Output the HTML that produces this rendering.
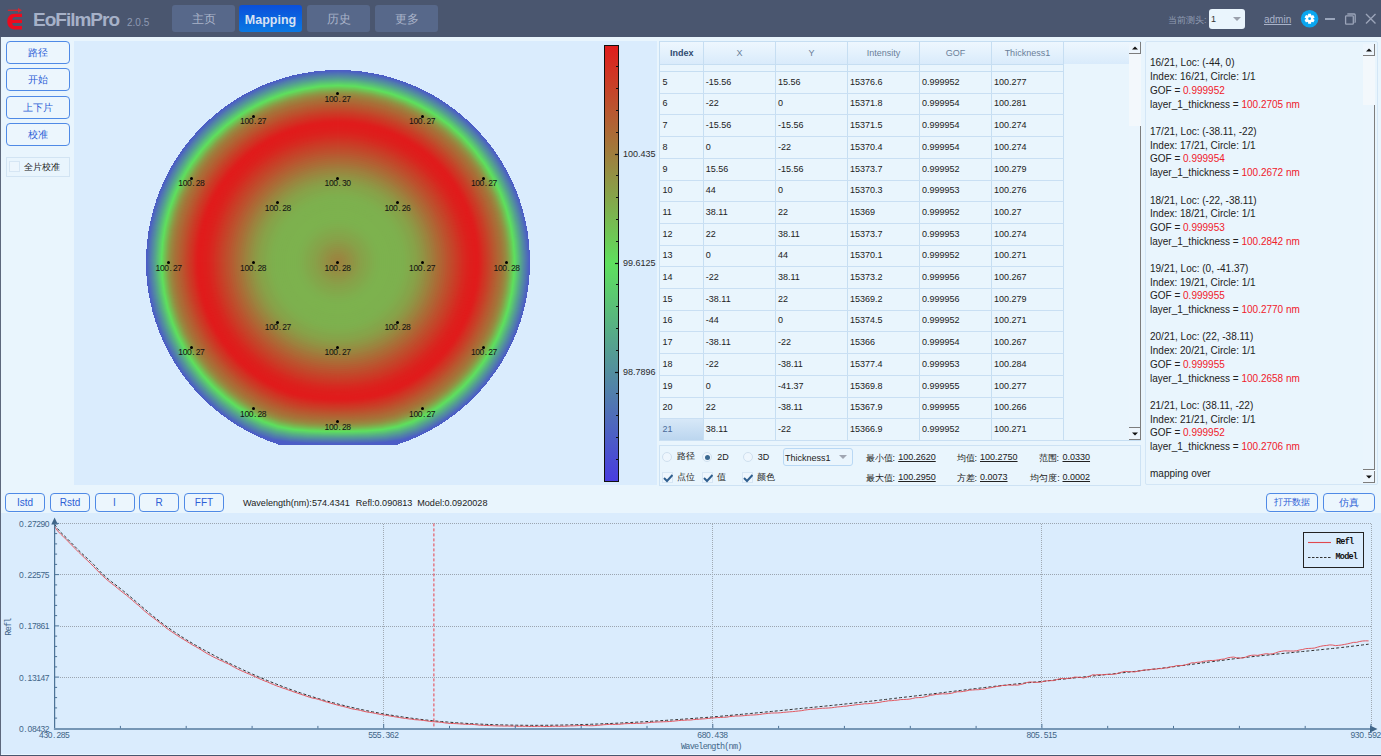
<!DOCTYPE html><html><head><meta charset="utf-8"><style>

*{margin:0;padding:0;box-sizing:border-box}
html,body{width:1381px;height:756px;overflow:hidden}
body{position:relative;background:#e9f5fd;font-family:"Liberation Sans",sans-serif;color:#222}
.abs{position:absolute;white-space:nowrap}
.tb{position:absolute;left:0;top:0;width:1381px;height:37px;background:#4a566f}
.nav{position:absolute;top:5px;height:27px;width:63px;border-radius:3px;background:#57688a;color:#a9b3c9;font-size:12px;text-align:center;line-height:29px}
.nav.act{background:linear-gradient(#0a4fdb,#0a79e3);color:#d6e2f3;font-weight:bold;font-size:12.5px;line-height:30px}
.btn{position:absolute;border:1.5px solid #4f8ae6;border-radius:4px;background:#ecf6fd;color:#2d5fd6;font-size:10px;text-align:center}
.cell{position:absolute;font-size:9px;color:#222;white-space:nowrap}
.lbl{position:absolute;font-size:8.5px;color:#111;white-space:nowrap;transform:translateX(-50%)}
.dot{position:absolute;width:3px;height:3px;border-radius:50%;background:#000}
.log{position:absolute;left:1150px;font-size:10px;color:#222;white-space:nowrap;line-height:13.7px}
.red{color:#f0202a}
.ax{position:absolute;font-family:"Liberation Mono",monospace;font-size:9px;color:#3a5f86;white-space:nowrap}

</style></head><body>
<div class="tb"></div>
<svg class="abs" style="left:0;top:0" width="30" height="35">
<path d="M7.8 10.3H19.5" stroke="#d8252e" stroke-width="1.2" fill="none"/>
<path d="M18 7.9L22 10.3L18 12.7Z" fill="#d8252e"/>
<path d="M22 13.7L14.8 13.7C9.8 13.7 7.3 17.2 7.3 21.5C7.3 25.9 9.8 29.4 14.8 29.4L22 29.4L22 26L15 26C13.3 26 12.3 24.8 12.2 23L22 23L22 19.7L12.2 19.7C12.4 18 13.3 17.1 15 17.1L22 17.1Z" fill="#ec0a1e"/>
</svg>
<div class="abs" style="left:33px;top:9px;font-size:19px;font-weight:bold;color:#a6b1c8;letter-spacing:-1px">EoFilmPro</div>
<div class="abs" style="left:127px;top:17px;font-size:10px;color:#8e9ab3">2.0.5</div>
<div class="nav" style="left:172px">主页</div>
<div class="nav act" style="left:239px">Mapping</div>
<div class="nav" style="left:307px">历史</div>
<div class="nav" style="left:375px">更多</div>
<div class="abs" style="left:1168px;top:14px;font-size:9px;color:#939eb4">当前测头:</div>
<div class="abs" style="left:1209px;top:9px;width:36px;height:20px;background:#eaf5fd;border-radius:3px"></div>
<div class="abs" style="left:1211px;top:14px;font-size:9px;color:#333">1</div>
<svg class="abs" style="left:1233px;top:17px" width="8" height="5"><path d="M0 0H8L4 4Z" fill="#9aa0ac"/></svg>
<div class="abs" style="left:1264px;top:13.5px;font-size:10px;color:#a9b3c9;text-decoration:underline">admin</div>
<svg class="abs" style="left:1300px;top:9px" width="20" height="20" viewBox="0 0 20 20">
<circle cx="9.6" cy="9.7" r="8.8" fill="#0aa6ef"/>
<g transform="translate(9.6 9.7)" fill="#fff"><circle r="3.7"/><rect x="-1.5" y="-5.0" width="3" height="3" rx="0.3" transform="rotate(0)"/><rect x="-1.5" y="-5.0" width="3" height="3" rx="0.3" transform="rotate(60)"/><rect x="-1.5" y="-5.0" width="3" height="3" rx="0.3" transform="rotate(120)"/><rect x="-1.5" y="-5.0" width="3" height="3" rx="0.3" transform="rotate(180)"/><rect x="-1.5" y="-5.0" width="3" height="3" rx="0.3" transform="rotate(240)"/><rect x="-1.5" y="-5.0" width="3" height="3" rx="0.3" transform="rotate(300)"/></g>
<circle cx="9.6" cy="9.7" r="1.4" fill="#0aa6ef"/>
</svg>
<div class="abs" style="left:1325px;top:18px;width:10px;height:2px;background:#9aa5bb"></div>
<svg class="abs" style="left:1343px;top:12px" width="15" height="15"><path d="M4.5 2.6C4.5 2.3 4.8 2 5.3 2H11.3C11.8 2 12.2 2.4 12.2 2.9V9.8C12.2 10.2 11.9 10.5 11.5 10.5" stroke="#9ba4b9" stroke-width="1.3" fill="none"/><rect x="2.6" y="3.8" width="7.7" height="8.4" rx="0.8" stroke="#9ba4b9" stroke-width="1.3" fill="#4a566f"/></svg>
<svg class="abs" style="left:1365px;top:13px" width="12" height="12"><path d="M1 1L10.5 10.5M10.5 1L1 10.5" stroke="#9ba4b9" stroke-width="1.4"/></svg>
<div class="abs" style="left:0;top:37px;width:1px;height:719px;background:#5d687c"></div>
<div class="abs" style="left:0;top:755px;width:1381px;height:1px;background:#4a566f"></div>
<div class="btn" style="left:6px;top:41px;width:64px;height:23px;line-height:21px">路径</div>
<div class="btn" style="left:6px;top:68px;width:64px;height:23px;line-height:21px">开始</div>
<div class="btn" style="left:6px;top:96px;width:64px;height:23px;line-height:21px">上下片</div>
<div class="btn" style="left:6px;top:123px;width:64px;height:23px;line-height:21px">校准</div>
<div class="abs" style="left:6px;top:157px;width:64px;height:20px;border:1px solid #d2e4f3"></div>
<div class="abs" style="left:9px;top:161px;width:11px;height:11px;border:1px solid #d6e6f4;background:#edf6fd"></div>
<div class="abs" style="left:24px;top:161px;font-size:9px;color:#222">全片校准</div>
<div class="abs" style="left:74px;top:41px;width:583px;height:444px;background:#daecfd"></div>
<svg class="abs" style="left:0;top:0" width="660" height="490"><path shape-rendering="crispEdges" d="M279.91 445.0A192.0 192.0 0 1 1 396.09 445.0Z" fill="#4c5dc6"/><path d="M529.0 262.0 L528.3 278.6 L526.1 295.2 L522.5 311.4 L517.5 327.3 L511.1 342.7 L503.4 357.5 L494.5 371.6 L484.3 384.8 L473.1 397.1 L460.8 408.3 L447.5 418.5 L433.5 427.3 L418.5 434.7 L402.7 439.7 L386.3 442.1 L369.9 443.1 L353.9 443.5 L338.0 443.5 L322.1 443.5 L306.1 443.1 L289.7 442.1 L273.3 439.7 L257.5 434.7 L242.5 427.3 L228.5 418.5 L215.2 408.3 L202.9 397.1 L191.7 384.8 L181.5 371.6 L172.6 357.5 L164.9 342.7 L158.5 327.3 L153.5 311.4 L149.9 295.2 L147.7 278.6 L147.0 262.0 A191.0 191.0 0 0 1 529.0 262.0Z" fill="#4d64c0"/><path d="M528.0 262.0 L527.3 278.6 L525.1 295.0 L521.5 311.2 L516.5 327.0 L510.2 342.3 L502.5 357.0 L493.6 371.0 L483.5 384.1 L472.4 396.4 L460.1 407.5 L447.0 417.6 L433.0 426.5 L418.1 433.8 L402.3 438.8 L386.0 441.3 L369.8 442.3 L353.8 442.6 L338.0 442.7 L322.2 442.6 L306.2 442.3 L290.0 441.3 L273.7 438.8 L257.9 433.8 L243.0 426.5 L229.0 417.6 L215.9 407.5 L203.6 396.4 L192.5 384.1 L182.4 371.0 L173.5 357.0 L165.8 342.3 L159.5 327.0 L154.5 311.2 L150.9 295.0 L148.7 278.6 L148.0 262.0 A190.0 190.0 0 0 1 528.0 262.0Z" fill="#4e6cba"/><path d="M527.0 262.0 L526.3 278.5 L524.1 294.8 L520.6 310.9 L515.6 326.6 L509.3 341.9 L501.7 356.5 L492.8 370.4 L482.8 383.5 L471.6 395.6 L459.5 406.8 L446.4 416.8 L432.5 425.6 L417.7 432.9 L402.0 437.9 L385.8 440.4 L369.6 441.4 L353.7 441.8 L338.0 441.9 L322.3 441.8 L306.4 441.4 L290.2 440.4 L274.0 437.9 L258.3 432.9 L243.5 425.6 L229.6 416.8 L216.5 406.8 L204.4 395.6 L193.2 383.5 L183.2 370.4 L174.3 356.5 L166.7 341.9 L160.4 326.6 L155.4 310.9 L151.9 294.8 L149.7 278.5 L149.0 262.0 A189.0 189.0 0 0 1 527.0 262.0Z" fill="#5074b3"/><path d="M526.0 262.0 L525.3 278.4 L523.1 294.6 L519.6 310.7 L514.7 326.3 L508.4 341.5 L500.8 356.0 L492.0 369.8 L482.0 382.8 L470.9 394.9 L458.8 406.0 L445.8 416.0 L432.0 424.8 L417.3 432.0 L401.7 437.0 L385.6 439.5 L369.5 440.6 L353.7 441.0 L338.0 441.1 L322.3 441.0 L306.5 440.6 L290.4 439.5 L274.3 437.0 L258.7 432.0 L244.0 424.8 L230.2 416.0 L217.2 406.0 L205.1 394.9 L194.0 382.8 L184.0 369.8 L175.2 356.0 L167.6 341.5 L161.3 326.3 L156.4 310.7 L152.9 294.6 L150.7 278.4 L150.0 262.0 A188.0 188.0 0 0 1 526.0 262.0Z" fill="#517cad"/><path d="M525.0 262.0 L524.3 278.3 L522.2 294.5 L518.6 310.4 L513.7 326.0 L507.5 341.0 L499.9 355.5 L491.2 369.3 L481.3 382.2 L470.2 394.2 L458.2 405.2 L445.3 415.2 L431.5 423.9 L416.8 431.1 L401.4 436.1 L385.3 438.7 L369.3 439.7 L353.6 440.1 L338.0 440.2 L322.4 440.1 L306.7 439.7 L290.7 438.7 L274.6 436.1 L259.2 431.1 L244.5 423.9 L230.7 415.2 L217.8 405.2 L205.8 394.2 L194.7 382.2 L184.8 369.3 L176.1 355.5 L168.5 341.0 L162.3 326.0 L157.4 310.4 L153.8 294.5 L151.7 278.3 L151.0 262.0 A187.0 187.0 0 0 1 525.0 262.0Z" fill="#5285a6"/><path d="M524.0 262.0 L523.3 278.2 L521.2 294.3 L517.7 310.1 L512.8 325.6 L506.6 340.6 L499.1 355.0 L490.4 368.7 L480.5 381.6 L469.5 393.5 L457.6 404.5 L444.7 414.4 L431.0 423.0 L416.4 430.2 L401.0 435.2 L385.1 437.8 L369.2 438.9 L353.5 439.3 L338.0 439.4 L322.5 439.3 L306.8 438.9 L290.9 437.8 L275.0 435.2 L259.6 430.2 L245.0 423.0 L231.3 414.4 L218.4 404.5 L206.5 393.5 L195.5 381.6 L185.6 368.7 L176.9 355.0 L169.4 340.6 L163.2 325.6 L158.3 310.1 L154.8 294.3 L152.7 278.2 L152.0 262.0 A186.0 186.0 0 0 1 524.0 262.0Z" fill="#538da0"/><path d="M523.0 262.0 L522.3 278.1 L520.2 294.1 L516.7 309.9 L511.8 325.3 L505.7 340.2 L498.2 354.5 L489.5 368.1 L479.7 380.9 L468.8 392.8 L456.9 403.7 L444.1 413.5 L430.5 422.2 L416.0 429.3 L400.7 434.3 L384.9 436.9 L369.0 438.0 L353.4 438.5 L338.0 438.6 L322.6 438.5 L307.0 438.0 L291.1 436.9 L275.3 434.3 L260.0 429.3 L245.5 422.2 L231.9 413.5 L219.1 403.7 L207.2 392.8 L196.3 380.9 L186.5 368.1 L177.8 354.5 L170.3 340.2 L164.2 325.3 L159.3 309.9 L155.8 294.1 L153.7 278.1 L153.0 262.0 A185.0 185.0 0 0 1 523.0 262.0Z" fill="#549699"/><path d="M522.0 262.0 L521.3 278.0 L519.2 294.0 L515.7 309.6 L510.9 324.9 L504.8 339.8 L497.3 354.0 L488.7 367.5 L479.0 380.3 L468.1 392.1 L456.3 403.0 L443.5 412.7 L430.0 421.3 L415.6 428.4 L400.4 433.4 L384.6 436.1 L368.9 437.2 L353.4 437.6 L338.0 437.7 L322.6 437.6 L307.1 437.2 L291.4 436.1 L275.6 433.4 L260.4 428.4 L246.0 421.3 L232.5 412.7 L219.7 403.0 L207.9 392.1 L197.0 380.3 L187.3 367.5 L178.7 354.0 L171.2 339.8 L165.1 324.9 L160.3 309.6 L156.8 294.0 L154.7 278.0 L154.0 262.0 A184.0 184.0 0 0 1 522.0 262.0Z" fill="#559f92"/><path d="M521.0 262.0 L520.3 277.9 L518.2 293.8 L514.8 309.4 L510.0 324.6 L503.9 339.3 L496.5 353.5 L487.9 367.0 L478.2 379.6 L467.4 391.4 L455.6 402.2 L443.0 411.9 L429.5 420.4 L415.2 427.5 L400.1 432.5 L384.4 435.2 L368.7 436.4 L353.3 436.8 L338.0 436.9 L322.7 436.8 L307.3 436.4 L291.6 435.2 L275.9 432.5 L260.8 427.5 L246.5 420.4 L233.0 411.9 L220.4 402.2 L208.6 391.4 L197.8 379.6 L188.1 367.0 L179.5 353.5 L172.1 339.3 L166.0 324.6 L161.2 309.4 L157.8 293.8 L155.7 277.9 L155.0 262.0 A183.0 183.0 0 0 1 521.0 262.0Z" fill="#56a88a"/><path d="M520.0 262.0 L519.3 277.9 L517.2 293.6 L513.8 309.1 L509.0 324.2 L502.9 338.9 L495.6 353.0 L487.1 366.4 L477.4 379.0 L466.7 390.7 L455.0 401.4 L442.4 411.1 L429.0 419.6 L414.8 426.6 L399.7 431.6 L384.2 434.3 L368.6 435.5 L353.2 436.0 L338.0 436.1 L322.8 436.0 L307.4 435.5 L291.8 434.3 L276.3 431.6 L261.2 426.6 L247.0 419.6 L233.6 411.1 L221.0 401.4 L209.3 390.7 L198.6 379.0 L188.9 366.4 L180.4 353.0 L173.1 338.9 L167.0 324.2 L162.2 309.1 L158.8 293.6 L156.7 277.9 L156.0 262.0 A182.0 182.0 0 0 1 520.0 262.0Z" fill="#58b183"/><path d="M519.0 262.0 L518.3 277.8 L516.3 293.4 L512.8 308.8 L508.1 323.9 L502.0 338.5 L494.8 352.5 L486.3 365.8 L476.7 378.3 L466.0 390.0 L454.3 400.7 L441.8 410.3 L428.5 418.7 L414.3 425.7 L399.4 430.7 L383.9 433.5 L368.4 434.7 L353.1 435.1 L338.0 435.2 L322.9 435.1 L307.6 434.7 L292.1 433.5 L276.6 430.7 L261.7 425.7 L247.5 418.7 L234.2 410.3 L221.7 400.7 L210.0 390.0 L199.3 378.3 L189.7 365.8 L181.2 352.5 L174.0 338.5 L167.9 323.9 L163.2 308.8 L159.7 293.4 L157.7 277.8 L157.0 262.0 A181.0 181.0 0 0 1 519.0 262.0Z" fill="#59bb7b"/><path d="M518.0 262.0 L517.3 277.7 L515.3 293.3 L511.9 308.6 L507.1 323.6 L501.1 338.1 L493.9 352.0 L485.4 365.2 L475.9 377.7 L465.3 389.3 L453.7 399.9 L441.2 409.4 L428.0 417.8 L413.9 424.8 L399.1 429.8 L383.7 432.6 L368.3 433.8 L353.1 434.3 L338.0 434.4 L322.9 434.3 L307.7 433.8 L292.3 432.6 L276.9 429.8 L262.1 424.8 L248.0 417.8 L234.8 409.4 L222.3 399.9 L210.7 389.3 L200.1 377.7 L190.6 365.2 L182.1 352.0 L174.9 338.1 L168.9 323.6 L164.1 308.6 L160.7 293.3 L158.7 277.7 L158.0 262.0 A180.0 180.0 0 0 1 518.0 262.0Z" fill="#5ac574"/><path d="M517.0 262.0 L516.3 277.6 L514.3 293.1 L510.9 308.3 L506.2 323.2 L500.2 337.6 L493.0 351.5 L484.6 364.7 L475.1 377.1 L464.6 388.6 L453.1 399.1 L440.7 408.6 L427.5 417.0 L413.5 423.9 L398.7 428.9 L383.5 431.7 L368.1 432.9 L353.0 433.4 L338.0 433.6 L323.0 433.4 L307.9 432.9 L292.5 431.7 L277.3 428.9 L262.5 423.9 L248.5 417.0 L235.3 408.6 L222.9 399.1 L211.4 388.6 L200.9 377.1 L191.4 364.7 L183.0 351.5 L175.8 337.6 L169.8 323.2 L165.1 308.3 L161.7 293.1 L159.7 277.6 L159.0 262.0 A179.0 179.0 0 0 1 517.0 262.0Z" fill="#5cce6c"/><path d="M516.0 262.0 L515.3 277.5 L513.3 292.9 L509.9 308.1 L505.3 322.9 L499.3 337.2 L492.2 351.0 L483.8 364.1 L474.4 376.4 L463.9 387.9 L452.4 398.4 L440.1 407.8 L427.0 416.1 L413.1 423.0 L398.4 428.0 L383.2 430.8 L368.0 432.1 L352.9 432.6 L338.0 432.7 L323.1 432.6 L308.0 432.1 L292.8 430.8 L277.6 428.0 L262.9 423.0 L249.0 416.1 L235.9 407.8 L223.6 398.4 L212.1 387.9 L201.6 376.4 L192.2 364.1 L183.8 351.0 L176.7 337.2 L170.7 322.9 L166.1 308.1 L162.7 292.9 L160.7 277.5 L160.0 262.0 A178.0 178.0 0 0 1 516.0 262.0Z" fill="#5dd765"/><path d="M515.0 262.0 L514.3 277.4 L512.3 292.7 L509.0 307.8 L504.3 322.5 L498.4 336.8 L491.3 350.5 L483.0 363.5 L473.6 375.8 L463.2 387.2 L451.8 397.6 L439.5 407.0 L426.5 415.2 L412.7 422.1 L398.1 427.1 L383.0 429.9 L367.8 431.2 L352.9 431.8 L338.0 431.9 L323.1 431.8 L308.2 431.2 L293.0 429.9 L277.9 427.1 L263.3 422.1 L249.5 415.2 L236.5 407.0 L224.2 397.6 L212.8 387.2 L202.4 375.8 L193.0 363.5 L184.7 350.5 L177.6 336.8 L171.7 322.5 L167.0 307.8 L163.7 292.7 L161.7 277.4 L161.0 262.0 A177.0 177.0 0 0 1 515.0 262.0Z" fill="#5ee05e"/><path d="M514.0 262.0 L513.3 277.3 L511.3 292.6 L508.0 307.6 L503.4 322.2 L497.5 336.4 L490.4 350.0 L482.2 362.9 L472.8 375.1 L462.5 386.5 L451.1 396.8 L438.9 406.2 L426.0 414.4 L412.2 421.2 L397.8 426.2 L382.8 429.1 L367.7 430.4 L352.8 430.9 L338.0 431.1 L323.2 430.9 L308.3 430.4 L293.2 429.1 L278.2 426.2 L263.8 421.2 L250.0 414.4 L237.1 406.2 L224.9 396.8 L213.5 386.5 L203.2 375.1 L193.8 362.9 L185.6 350.0 L178.5 336.4 L172.6 322.2 L168.0 307.6 L164.7 292.6 L162.7 277.3 L162.0 262.0 A176.0 176.0 0 0 1 514.0 262.0Z" fill="#65d65a"/><path d="M513.0 262.0 L512.3 277.3 L510.3 292.4 L507.0 307.3 L502.4 321.9 L496.6 336.0 L489.6 349.5 L481.4 362.4 L472.1 374.5 L461.7 385.7 L450.5 396.1 L438.4 405.3 L425.5 413.5 L411.8 420.3 L397.4 425.3 L382.5 428.2 L367.5 429.5 L352.7 430.1 L338.0 430.2 L323.3 430.1 L308.5 429.5 L293.5 428.2 L278.6 425.3 L264.2 420.3 L250.5 413.5 L237.6 405.3 L225.5 396.1 L214.3 385.7 L203.9 374.5 L194.6 362.4 L186.4 349.5 L179.4 336.0 L173.6 321.9 L169.0 307.3 L165.7 292.4 L163.7 277.3 L163.0 262.0 A175.0 175.0 0 0 1 513.0 262.0Z" fill="#6ccb57"/><path d="M512.0 262.0 L511.3 277.2 L509.4 292.2 L506.1 307.0 L501.5 321.5 L495.7 335.5 L488.7 349.0 L480.5 361.8 L471.3 373.8 L461.0 385.0 L449.8 395.3 L437.8 404.5 L425.0 412.6 L411.4 419.4 L397.1 424.4 L382.3 427.3 L367.4 428.7 L352.6 429.2 L338.0 429.4 L323.4 429.2 L308.6 428.7 L293.7 427.3 L278.9 424.4 L264.6 419.4 L251.0 412.6 L238.2 404.5 L226.2 395.3 L215.0 385.0 L204.7 373.8 L195.5 361.8 L187.3 349.0 L180.3 335.5 L174.5 321.5 L169.9 307.0 L166.6 292.2 L164.7 277.2 L164.0 262.0 A174.0 174.0 0 0 1 512.0 262.0Z" fill="#73c053"/><path d="M511.0 262.0 L510.3 277.1 L508.4 292.0 L505.1 306.8 L500.6 321.2 L494.8 335.1 L487.8 348.5 L479.7 361.2 L470.5 373.2 L460.3 384.3 L449.2 394.5 L437.2 403.7 L424.5 411.8 L411.0 418.5 L396.8 423.5 L382.1 426.4 L367.2 427.8 L352.6 428.4 L338.0 428.5 L323.4 428.4 L308.8 427.8 L293.9 426.4 L279.2 423.5 L265.0 418.5 L251.5 411.8 L238.8 403.7 L226.8 394.5 L215.7 384.3 L205.5 373.2 L196.3 361.2 L188.2 348.5 L181.2 335.1 L175.4 321.2 L170.9 306.8 L167.6 292.0 L165.7 277.1 L165.0 262.0 A173.0 173.0 0 0 1 511.0 262.0Z" fill="#7ab650"/><path d="M510.0 262.0 L509.3 277.0 L507.4 291.9 L504.1 306.5 L499.6 320.8 L493.9 334.7 L487.0 348.0 L478.9 360.7 L469.8 372.6 L459.6 383.6 L448.6 393.8 L436.7 402.9 L424.0 410.9 L410.6 417.6 L396.4 422.6 L381.8 425.5 L367.1 426.9 L352.5 427.5 L338.0 427.7 L323.5 427.5 L308.9 426.9 L294.2 425.5 L279.6 422.6 L265.4 417.6 L252.0 410.9 L239.3 402.9 L227.4 393.8 L216.4 383.6 L206.2 372.6 L197.1 360.7 L189.0 348.0 L182.1 334.7 L176.4 320.8 L171.9 306.5 L168.6 291.9 L166.7 277.0 L166.0 262.0 A172.0 172.0 0 0 1 510.0 262.0Z" fill="#81ab4c"/><path d="M509.0 262.0 L508.3 276.9 L506.4 291.7 L503.2 306.3 L498.7 320.5 L493.0 334.3 L486.1 347.5 L478.1 360.1 L469.0 371.9 L458.9 382.9 L447.9 393.0 L436.1 402.1 L423.5 410.0 L410.1 416.7 L396.1 421.7 L381.6 424.6 L366.9 426.1 L352.4 426.7 L338.0 426.8 L323.6 426.7 L309.1 426.1 L294.4 424.6 L279.9 421.7 L265.9 416.7 L252.5 410.0 L239.9 402.1 L228.1 393.0 L217.1 382.9 L207.0 371.9 L197.9 360.1 L189.9 347.5 L183.0 334.3 L177.3 320.5 L172.8 306.3 L169.6 291.7 L167.7 276.9 L167.0 262.0 A171.0 171.0 0 0 1 509.0 262.0Z" fill="#88a149"/><path d="M508.0 262.0 L507.4 276.8 L505.4 291.5 L502.2 306.0 L497.7 320.1 L492.1 333.8 L485.2 347.0 L477.3 359.5 L468.2 371.3 L458.2 382.2 L447.3 392.2 L435.5 401.2 L423.0 409.2 L409.7 415.8 L395.8 420.8 L381.3 423.7 L366.8 425.2 L352.3 425.8 L338.0 426.0 L323.7 425.8 L309.2 425.2 L294.7 423.7 L280.2 420.8 L266.3 415.8 L253.0 409.2 L240.5 401.2 L228.7 392.2 L217.8 382.2 L207.8 371.3 L198.7 359.5 L190.8 347.0 L183.9 333.8 L178.3 320.1 L173.8 306.0 L170.6 291.5 L168.6 276.8 L168.0 262.0 A170.0 170.0 0 0 1 508.0 262.0Z" fill="#8e9846"/><path d="M507.0 262.0 L506.4 276.7 L504.4 291.3 L501.2 305.7 L496.8 319.8 L491.2 333.4 L484.4 346.5 L476.4 358.9 L467.5 370.6 L457.5 381.5 L446.6 391.5 L434.9 400.4 L422.5 408.3 L409.3 414.9 L395.5 419.8 L381.1 422.8 L366.6 424.3 L352.3 425.0 L338.0 425.1 L323.7 425.0 L309.4 424.3 L294.9 422.8 L280.5 419.8 L266.7 414.9 L253.5 408.3 L241.1 400.4 L229.4 391.5 L218.5 381.5 L208.5 370.6 L199.6 358.9 L191.6 346.5 L184.8 333.4 L179.2 319.8 L174.8 305.7 L171.6 291.3 L169.6 276.7 L169.0 262.0 A169.0 169.0 0 0 1 507.0 262.0Z" fill="#939043"/><path d="M506.0 262.0 L505.4 276.6 L503.4 291.2 L500.3 305.5 L495.9 319.5 L490.3 333.0 L483.5 346.0 L475.6 358.4 L466.7 370.0 L456.8 380.8 L446.0 390.7 L434.4 399.6 L422.0 407.4 L408.9 414.0 L395.1 418.9 L380.9 422.0 L366.5 423.5 L352.2 424.1 L338.0 424.3 L323.8 424.1 L309.5 423.5 L295.1 422.0 L280.9 418.9 L267.1 414.0 L254.0 407.4 L241.6 399.6 L230.0 390.7 L219.2 380.8 L209.3 370.0 L200.4 358.4 L192.5 346.0 L185.7 333.0 L180.1 319.5 L175.7 305.5 L172.6 291.2 L170.6 276.6 L170.0 262.0 A168.0 168.0 0 0 1 506.0 262.0Z" fill="#988941"/><path d="M505.0 262.0 L504.4 276.6 L502.5 291.0 L499.3 305.2 L494.9 319.1 L489.4 332.6 L482.6 345.5 L474.8 357.8 L465.9 369.3 L456.1 380.1 L445.3 389.9 L433.8 398.8 L421.5 406.6 L408.5 413.1 L394.8 418.0 L380.6 421.1 L366.3 422.6 L352.1 423.2 L338.0 423.4 L323.9 423.2 L309.7 422.6 L295.4 421.1 L281.2 418.0 L267.5 413.1 L254.5 406.6 L242.2 398.8 L230.7 389.9 L219.9 380.1 L210.1 369.3 L201.2 357.8 L193.4 345.5 L186.6 332.6 L181.1 319.1 L176.7 305.2 L173.5 291.0 L171.6 276.6 L171.0 262.0 A167.0 167.0 0 0 1 505.0 262.0Z" fill="#9c833f"/><path d="M504.0 262.0 L503.4 276.5 L501.5 290.8 L498.3 305.0 L494.0 318.8 L488.4 332.2 L481.8 345.0 L474.0 357.2 L465.2 368.7 L455.4 379.4 L444.7 389.2 L433.2 398.0 L421.0 405.7 L408.0 412.2 L394.5 417.1 L380.4 420.2 L366.2 421.7 L352.0 422.4 L338.0 422.6 L324.0 422.4 L309.8 421.7 L295.6 420.2 L281.5 417.1 L268.0 412.2 L255.0 405.7 L242.8 398.0 L231.3 389.2 L220.6 379.4 L210.8 368.7 L202.0 357.2 L194.2 345.0 L187.6 332.2 L182.0 318.8 L177.7 305.0 L174.5 290.8 L172.6 276.5 L172.0 262.0 A166.0 166.0 0 0 1 504.0 262.0Z" fill="#9f7e3d"/><path d="M503.0 262.0 L502.4 276.4 L500.5 290.7 L497.4 304.7 L493.0 318.4 L487.5 331.7 L480.9 344.5 L473.2 356.6 L464.4 368.1 L454.7 378.7 L444.1 388.4 L432.6 397.2 L420.5 404.9 L407.6 411.3 L394.1 416.2 L380.1 419.3 L366.0 420.8 L352.0 421.5 L338.0 421.7 L324.0 421.5 L310.0 420.8 L295.9 419.3 L281.9 416.2 L268.4 411.3 L255.5 404.9 L243.4 397.2 L231.9 388.4 L221.3 378.7 L211.6 368.1 L202.8 356.6 L195.1 344.5 L188.5 331.7 L183.0 318.4 L178.6 304.7 L175.5 290.7 L173.6 276.4 L173.0 262.0 A165.0 165.0 0 0 1 503.0 262.0Z" fill="#a2793b"/><path d="M502.0 262.0 L501.4 276.3 L499.5 290.5 L496.4 304.4 L492.1 318.1 L486.6 331.3 L480.0 344.0 L472.3 356.1 L463.6 367.4 L454.0 378.0 L443.4 387.6 L432.1 396.3 L420.0 404.0 L407.2 410.4 L393.8 415.3 L379.9 418.4 L365.9 419.9 L351.9 420.6 L338.0 420.8 L324.1 420.6 L310.1 419.9 L296.1 418.4 L282.2 415.3 L268.8 410.4 L256.0 404.0 L243.9 396.3 L232.6 387.6 L222.0 378.0 L212.4 367.4 L203.7 356.1 L196.0 344.0 L189.4 331.3 L183.9 318.1 L179.6 304.4 L176.5 290.5 L174.6 276.3 L174.0 262.0 A164.0 164.0 0 0 1 502.0 262.0Z" fill="#a5743a"/><path d="M501.0 262.0 L500.4 276.2 L498.5 290.3 L495.4 304.2 L491.2 317.7 L485.7 330.9 L479.2 343.5 L471.5 355.5 L462.9 366.8 L453.3 377.3 L442.8 386.9 L431.5 395.5 L419.5 403.1 L406.8 409.5 L393.5 414.4 L379.7 417.5 L365.7 419.1 L351.8 419.8 L338.0 420.0 L324.2 419.8 L310.3 419.1 L296.3 417.5 L282.5 414.4 L269.2 409.5 L256.5 403.1 L244.5 395.5 L233.2 386.9 L222.7 377.3 L213.1 366.8 L204.5 355.5 L196.8 343.5 L190.3 330.9 L184.8 317.7 L180.6 304.2 L177.5 290.3 L175.6 276.2 L175.0 262.0 A163.0 163.0 0 0 1 501.0 262.0Z" fill="#a87038"/><path d="M500.0 262.0 L499.4 276.1 L497.5 290.1 L494.5 303.9 L490.2 317.4 L484.8 330.5 L478.3 343.0 L470.7 354.9 L462.1 366.1 L452.6 376.6 L442.1 386.1 L430.9 394.7 L419.0 402.3 L406.4 408.6 L393.1 413.5 L379.4 416.6 L365.5 418.2 L351.7 418.9 L338.0 419.1 L324.3 418.9 L310.5 418.2 L296.6 416.6 L282.9 413.5 L269.6 408.6 L257.0 402.3 L245.1 394.7 L233.9 386.1 L223.4 376.6 L213.9 366.1 L205.3 354.9 L197.7 343.0 L191.2 330.5 L185.8 317.4 L181.5 303.9 L178.5 290.1 L176.6 276.1 L176.0 262.0 A162.0 162.0 0 0 1 500.0 262.0Z" fill="#ab6c37"/><path d="M499.0 262.0 L498.4 276.0 L496.6 290.0 L493.5 303.7 L489.3 317.1 L483.9 330.0 L477.4 342.5 L469.9 354.3 L461.3 365.5 L451.8 375.8 L441.5 385.3 L430.3 393.9 L418.5 401.4 L405.9 407.7 L392.8 412.5 L379.2 415.6 L365.4 417.3 L351.7 418.0 L338.0 418.2 L324.3 418.0 L310.6 417.3 L296.8 415.6 L283.2 412.5 L270.1 407.7 L257.5 401.4 L245.7 393.9 L234.5 385.3 L224.2 375.8 L214.7 365.5 L206.1 354.3 L198.6 342.5 L192.1 330.0 L186.7 317.1 L182.5 303.7 L179.4 290.0 L177.6 276.0 L177.0 262.0 A161.0 161.0 0 0 1 499.0 262.0Z" fill="#ad6936"/><path d="M498.0 262.0 L497.4 275.9 L495.6 289.8 L492.5 303.4 L488.4 316.7 L483.0 329.6 L476.6 342.0 L469.1 353.8 L460.6 364.8 L451.1 375.1 L440.8 384.6 L429.8 393.1 L418.0 400.5 L405.5 406.8 L392.5 411.6 L378.9 414.7 L365.2 416.4 L351.6 417.2 L338.0 417.4 L324.4 417.2 L310.8 416.4 L297.1 414.7 L283.5 411.6 L270.5 406.8 L258.0 400.5 L246.2 393.1 L235.2 384.6 L224.9 375.1 L215.4 364.8 L206.9 353.8 L199.4 342.0 L193.0 329.6 L187.6 316.7 L183.5 303.4 L180.4 289.8 L178.6 275.9 L178.0 262.0 A160.0 160.0 0 0 1 498.0 262.0Z" fill="#b06535"/><path d="M497.0 262.0 L496.4 275.9 L494.6 289.6 L491.6 303.2 L487.4 316.4 L482.1 329.2 L475.7 341.5 L468.2 353.2 L459.8 364.2 L450.4 374.4 L440.2 383.8 L429.2 392.2 L417.5 399.7 L405.1 405.9 L392.1 410.7 L378.7 413.8 L365.1 415.5 L351.5 416.3 L338.0 416.5 L324.5 416.3 L310.9 415.5 L297.3 413.8 L283.9 410.7 L270.9 405.9 L258.5 399.7 L246.8 392.2 L235.8 383.8 L225.6 374.4 L216.2 364.2 L207.8 353.2 L200.3 341.5 L193.9 329.2 L188.6 316.4 L184.4 303.2 L181.4 289.6 L179.6 275.9 L179.0 262.0 A159.0 159.0 0 0 1 497.0 262.0Z" fill="#b26133"/><path d="M496.0 262.0 L495.4 275.8 L493.6 289.4 L490.6 302.9 L486.5 316.0 L481.2 328.8 L474.8 341.0 L467.4 352.6 L459.0 363.6 L449.7 373.7 L439.6 383.0 L428.6 391.4 L417.0 398.8 L404.7 405.0 L391.8 409.8 L378.4 412.9 L364.9 414.6 L351.4 415.4 L338.0 415.6 L324.6 415.4 L311.1 414.6 L297.6 412.9 L284.2 409.8 L271.3 405.0 L259.0 398.8 L247.4 391.4 L236.4 383.0 L226.3 373.7 L217.0 363.6 L208.6 352.6 L201.2 341.0 L194.8 328.8 L189.5 316.0 L185.4 302.9 L182.4 289.4 L180.6 275.8 L180.0 262.0 A158.0 158.0 0 0 1 496.0 262.0Z" fill="#b55d32"/><path d="M495.0 262.0 L494.4 275.7 L492.6 289.3 L489.7 302.6 L485.5 315.7 L480.3 328.4 L474.0 340.5 L466.6 352.1 L458.3 362.9 L449.0 373.0 L438.9 382.3 L428.0 390.6 L416.5 397.9 L404.3 404.1 L391.5 408.9 L378.2 412.0 L364.8 413.7 L351.3 414.5 L338.0 414.8 L324.7 414.5 L311.2 413.7 L297.8 412.0 L284.5 408.9 L271.7 404.1 L259.5 397.9 L248.0 390.6 L237.1 382.3 L227.0 373.0 L217.7 362.9 L209.4 352.1 L202.0 340.5 L195.7 328.4 L190.5 315.7 L186.3 302.6 L183.4 289.3 L181.6 275.7 L181.0 262.0 A157.0 157.0 0 0 1 495.0 262.0Z" fill="#b75a31"/><path d="M494.0 262.0 L493.4 275.6 L491.6 289.1 L488.7 302.4 L484.6 315.4 L479.4 327.9 L473.1 340.0 L465.8 351.5 L457.5 362.3 L448.3 372.3 L438.3 381.5 L427.5 389.8 L416.0 397.1 L403.8 403.2 L391.1 408.0 L378.0 411.1 L364.6 412.8 L351.3 413.7 L338.0 413.9 L324.7 413.7 L311.4 412.8 L298.0 411.1 L284.9 408.0 L272.2 403.2 L260.0 397.1 L248.5 389.8 L237.7 381.5 L227.7 372.3 L218.5 362.3 L210.2 351.5 L202.9 340.0 L196.6 327.9 L191.4 315.4 L187.3 302.4 L184.4 289.1 L182.6 275.6 L182.0 262.0 A156.0 156.0 0 0 1 494.0 262.0Z" fill="#ba562f"/><path d="M493.0 262.0 L492.4 275.5 L490.6 288.9 L487.7 302.1 L483.7 315.0 L478.5 327.5 L472.2 339.5 L465.0 350.9 L456.7 361.6 L447.6 371.6 L437.6 380.7 L426.9 389.0 L415.5 396.2 L403.4 402.3 L390.8 407.0 L377.7 410.2 L364.4 411.9 L351.2 412.8 L338.0 413.0 L324.8 412.8 L311.6 411.9 L298.3 410.2 L285.2 407.0 L272.6 402.3 L260.5 396.2 L249.1 389.0 L238.4 380.7 L228.4 371.6 L219.3 361.6 L211.0 350.9 L203.8 339.5 L197.5 327.5 L192.3 315.0 L188.3 302.1 L185.4 288.9 L183.6 275.5 L183.0 262.0 A155.0 155.0 0 0 1 493.0 262.0Z" fill="#bc522e"/><path d="M492.0 262.0 L491.4 275.4 L489.7 288.7 L486.8 301.9 L482.7 314.7 L477.6 327.1 L471.4 339.0 L464.1 350.3 L456.0 361.0 L446.9 370.9 L437.0 380.0 L426.3 388.1 L415.0 395.3 L403.0 401.4 L390.5 406.1 L377.5 409.3 L364.3 411.0 L351.1 411.9 L338.0 412.1 L324.9 411.9 L311.7 411.0 L298.5 409.3 L285.5 406.1 L273.0 401.4 L261.0 395.3 L249.7 388.1 L239.0 380.0 L229.1 370.9 L220.0 361.0 L211.9 350.3 L204.6 339.0 L198.4 327.1 L193.3 314.7 L189.2 301.9 L186.3 288.7 L184.6 275.4 L184.0 262.0 A154.0 154.0 0 0 1 492.0 262.0Z" fill="#bf4e2d"/><path d="M491.0 262.0 L490.4 275.3 L488.7 288.6 L485.8 301.6 L481.8 314.3 L476.7 326.7 L470.5 338.5 L463.3 349.8 L455.2 360.3 L446.2 370.2 L436.3 379.2 L425.8 387.3 L414.5 394.5 L402.6 400.5 L390.1 405.2 L377.2 408.4 L364.1 410.1 L351.0 411.0 L338.0 411.2 L325.0 411.0 L311.9 410.1 L298.8 408.4 L285.9 405.2 L273.4 400.5 L261.5 394.5 L250.2 387.3 L239.7 379.2 L229.8 370.2 L220.8 360.3 L212.7 349.8 L205.5 338.5 L199.3 326.7 L194.2 314.3 L190.2 301.6 L187.3 288.6 L185.6 275.3 L185.0 262.0 A153.0 153.0 0 0 1 491.0 262.0Z" fill="#c24a2b"/><path d="M490.0 262.0 L489.4 275.2 L487.7 288.4 L484.8 301.3 L480.8 314.0 L475.8 326.2 L469.6 338.0 L462.5 349.2 L454.4 359.7 L445.5 369.5 L435.7 378.4 L425.2 386.5 L414.0 393.6 L402.2 399.6 L389.8 404.3 L377.0 407.4 L364.0 409.2 L351.0 410.1 L338.0 410.4 L325.0 410.1 L312.0 409.2 L299.0 407.4 L286.2 404.3 L273.8 399.6 L262.0 393.6 L250.8 386.5 L240.3 378.4 L230.5 369.5 L221.6 359.7 L213.5 349.2 L206.4 338.0 L200.2 326.2 L195.2 314.0 L191.2 301.3 L188.3 288.4 L186.6 275.2 L186.0 262.0 A152.0 152.0 0 0 1 490.0 262.0Z" fill="#c4462a"/><path d="M489.0 262.0 L488.4 275.2 L486.7 288.2 L483.9 301.1 L479.9 313.6 L474.9 325.8 L468.8 337.5 L461.7 348.6 L453.7 359.1 L444.8 368.8 L435.1 377.7 L424.6 385.7 L413.5 392.7 L401.7 398.7 L389.4 403.3 L376.7 406.5 L363.8 408.3 L350.9 409.2 L338.0 409.5 L325.1 409.2 L312.2 408.3 L299.3 406.5 L286.6 403.3 L274.3 398.7 L262.5 392.7 L251.4 385.7 L240.9 377.7 L231.2 368.8 L222.3 359.1 L214.3 348.6 L207.2 337.5 L201.1 325.8 L196.1 313.6 L192.1 301.1 L189.3 288.2 L187.6 275.2 L187.0 262.0 A151.0 151.0 0 0 1 489.0 262.0Z" fill="#c74229"/><path d="M488.0 262.0 L487.4 275.1 L485.7 288.0 L482.9 300.8 L479.0 313.3 L473.9 325.4 L467.9 337.0 L460.9 348.0 L452.9 358.4 L444.1 368.1 L434.4 376.9 L424.0 384.9 L413.0 391.9 L401.3 397.8 L389.1 402.4 L376.5 405.6 L363.6 407.4 L350.8 408.3 L338.0 408.6 L325.2 408.3 L312.4 407.4 L299.5 405.6 L286.9 402.4 L274.7 397.8 L263.0 391.9 L252.0 384.9 L241.6 376.9 L231.9 368.1 L223.1 358.4 L215.1 348.0 L208.1 337.0 L202.1 325.4 L197.0 313.3 L193.1 300.8 L190.3 288.0 L188.6 275.1 L188.0 262.0 A150.0 150.0 0 0 1 488.0 262.0Z" fill="#c93e28"/><path d="M487.0 262.0 L486.4 275.0 L484.7 287.9 L481.9 300.6 L478.0 313.0 L473.0 325.0 L467.0 336.5 L460.1 347.5 L452.1 357.8 L443.4 367.4 L433.8 376.1 L423.5 384.0 L412.5 391.0 L400.9 396.9 L388.8 401.5 L376.2 404.7 L363.5 406.5 L350.7 407.4 L338.0 407.7 L325.3 407.4 L312.5 406.5 L299.8 404.7 L287.2 401.5 L275.1 396.9 L263.5 391.0 L252.5 384.0 L242.2 376.1 L232.6 367.4 L223.9 357.8 L215.9 347.5 L209.0 336.5 L203.0 325.0 L198.0 313.0 L194.1 300.6 L191.3 287.9 L189.6 275.0 L189.0 262.0 A149.0 149.0 0 0 1 487.0 262.0Z" fill="#cc3b26"/><path d="M486.0 262.0 L485.4 274.9 L483.8 287.7 L481.0 300.3 L477.1 312.6 L472.1 324.5 L466.2 336.0 L459.2 346.9 L451.4 357.1 L442.7 366.7 L433.1 375.4 L422.9 383.2 L412.0 390.1 L400.5 396.0 L388.4 400.6 L376.0 403.8 L363.3 405.6 L350.6 406.5 L338.0 406.8 L325.4 406.5 L312.7 405.6 L300.0 403.8 L287.6 400.6 L275.5 396.0 L264.0 390.1 L253.1 383.2 L242.9 375.4 L233.3 366.7 L224.6 357.1 L216.8 346.9 L209.8 336.0 L203.9 324.5 L198.9 312.6 L195.0 300.3 L192.2 287.7 L190.6 274.9 L190.0 262.0 A148.0 148.0 0 0 1 486.0 262.0Z" fill="#ce3725"/><path d="M485.0 262.0 L484.4 274.8 L482.8 287.5 L480.0 300.0 L476.1 312.3 L471.2 324.1 L465.3 335.5 L458.4 346.3 L450.6 356.5 L441.9 365.9 L432.5 374.6 L422.3 382.4 L411.5 389.3 L400.1 395.1 L388.1 399.7 L375.7 402.8 L363.2 404.7 L350.6 405.6 L338.0 405.9 L325.4 405.6 L312.8 404.7 L300.3 402.8 L287.9 399.7 L275.9 395.1 L264.5 389.3 L253.7 382.4 L243.5 374.6 L234.1 365.9 L225.4 356.5 L217.6 346.3 L210.7 335.5 L204.8 324.1 L199.9 312.3 L196.0 300.0 L193.2 287.5 L191.6 274.8 L191.0 262.0 A147.0 147.0 0 0 1 485.0 262.0Z" fill="#d03424"/><path d="M484.0 262.0 L483.4 274.7 L481.8 287.4 L479.0 299.8 L475.2 311.9 L470.3 323.7 L464.4 335.0 L457.6 345.7 L449.8 355.8 L441.2 365.2 L431.8 373.8 L421.7 381.6 L411.0 388.4 L399.6 394.2 L387.8 398.7 L375.5 401.9 L363.0 403.8 L350.5 404.7 L338.0 405.0 L325.5 404.7 L313.0 403.8 L300.5 401.9 L288.2 398.7 L276.4 394.2 L265.0 388.4 L254.3 381.6 L244.2 373.8 L234.8 365.2 L226.2 355.8 L218.4 345.7 L211.6 335.0 L205.7 323.7 L200.8 311.9 L197.0 299.8 L194.2 287.4 L192.6 274.7 L192.0 262.0 A146.0 146.0 0 0 1 484.0 262.0Z" fill="#d33023"/><path d="M483.0 262.0 L482.4 274.6 L480.8 287.2 L478.1 299.5 L474.3 311.6 L469.4 323.3 L463.6 334.5 L456.8 345.2 L449.1 355.2 L440.5 364.5 L431.2 373.1 L421.2 380.8 L410.5 387.5 L399.2 393.3 L387.4 397.8 L375.2 401.0 L362.8 402.9 L350.4 403.8 L338.0 404.1 L325.6 403.8 L313.2 402.9 L300.8 401.0 L288.6 397.8 L276.8 393.3 L265.5 387.5 L254.8 380.8 L244.8 373.1 L235.5 364.5 L226.9 355.2 L219.2 345.2 L212.4 334.5 L206.6 323.3 L201.7 311.6 L197.9 299.5 L195.2 287.2 L193.6 274.6 L193.0 262.0 A145.0 145.0 0 0 1 483.0 262.0Z" fill="#d62c21"/><path d="M482.0 262.0 L481.5 274.6 L479.8 287.0 L477.1 299.3 L473.3 311.3 L468.5 322.9 L462.7 334.0 L456.0 344.6 L448.3 354.6 L439.8 363.8 L430.6 372.3 L420.6 380.0 L410.0 386.7 L398.8 392.4 L387.1 396.9 L375.0 400.0 L362.7 402.0 L350.3 402.9 L338.0 403.2 L325.7 402.9 L313.3 402.0 L301.0 400.0 L288.9 396.9 L277.2 392.4 L266.0 386.7 L255.4 380.0 L245.4 372.3 L236.2 363.8 L227.7 354.6 L220.0 344.6 L213.3 334.0 L207.5 322.9 L202.7 311.3 L198.9 299.3 L196.2 287.0 L194.5 274.6 L194.0 262.0 A144.0 144.0 0 0 1 482.0 262.0Z" fill="#d82820"/><path d="M481.0 262.0 L480.5 274.5 L478.8 286.8 L476.1 299.0 L472.4 310.9 L467.6 322.4 L461.8 333.5 L455.1 344.0 L447.5 353.9 L439.1 363.1 L429.9 371.5 L420.0 379.1 L409.5 385.8 L398.4 391.5 L386.8 396.0 L374.7 399.1 L362.5 401.0 L350.2 402.0 L338.0 402.3 L325.8 402.0 L313.5 401.0 L301.3 399.1 L289.2 396.0 L277.6 391.5 L266.5 385.8 L256.0 379.1 L246.1 371.5 L236.9 363.1 L228.5 353.9 L220.9 344.0 L214.2 333.5 L208.4 322.4 L203.6 310.9 L199.9 299.0 L197.2 286.8 L195.5 274.5 L195.0 262.0 A143.0 143.0 0 0 1 481.0 262.0Z" fill="#db241f"/><path d="M480.0 262.0 L479.5 274.4 L477.8 286.7 L475.2 298.8 L471.4 310.6 L466.7 322.0 L461.0 333.0 L454.3 343.4 L446.8 353.3 L438.4 362.4 L429.3 370.8 L419.4 378.3 L409.0 384.9 L398.0 390.6 L386.4 395.0 L374.5 398.2 L362.4 400.1 L350.2 401.1 L338.0 401.4 L325.8 401.1 L313.6 400.1 L301.5 398.2 L289.6 395.0 L278.0 390.6 L267.0 384.9 L256.6 378.3 L246.7 370.8 L237.6 362.4 L229.2 353.3 L221.7 343.4 L215.0 333.0 L209.3 322.0 L204.6 310.6 L200.8 298.8 L198.2 286.7 L196.5 274.4 L196.0 262.0 A142.0 142.0 0 0 1 480.0 262.0Z" fill="#dd211e"/><path d="M479.0 262.0 L478.5 274.3 L476.9 286.5 L474.2 298.5 L470.5 310.2 L465.8 321.6 L460.1 332.5 L453.5 342.9 L446.0 352.6 L437.7 361.7 L428.6 370.0 L418.9 377.5 L408.5 384.1 L397.5 389.7 L386.1 394.1 L374.2 397.3 L362.2 399.2 L350.1 400.2 L338.0 400.5 L325.9 400.2 L313.8 399.2 L301.8 397.3 L289.9 394.1 L278.5 389.7 L267.5 384.1 L257.1 377.5 L247.4 370.0 L238.3 361.7 L230.0 352.6 L222.5 342.9 L215.9 332.5 L210.2 321.6 L205.5 310.2 L201.8 298.5 L199.1 286.5 L197.5 274.3 L197.0 262.0 A141.0 141.0 0 0 1 479.0 262.0Z" fill="#de1e1d"/><path d="M478.0 262.0 L477.5 274.2 L475.9 286.3 L473.2 298.2 L469.6 309.9 L464.9 321.2 L459.2 332.0 L452.7 342.3 L445.2 352.0 L437.0 361.0 L428.0 369.2 L418.3 376.7 L408.0 383.2 L397.1 388.8 L385.7 393.2 L374.0 396.3 L362.0 398.3 L350.0 399.3 L338.0 399.6 L326.0 399.3 L314.0 398.3 L302.0 396.3 L290.3 393.2 L278.9 388.8 L268.0 383.2 L257.7 376.7 L248.0 369.2 L239.0 361.0 L230.8 352.0 L223.3 342.3 L216.8 332.0 L211.1 321.2 L206.4 309.9 L202.8 298.2 L200.1 286.3 L198.5 274.2 L198.0 262.0 A140.0 140.0 0 0 1 478.0 262.0Z" fill="#e01d1c"/><path d="M477.0 262.0 L476.5 274.1 L474.9 286.1 L472.3 298.0 L468.6 309.5 L464.0 320.7 L458.4 331.5 L451.9 341.7 L444.5 351.3 L436.3 360.3 L427.3 368.5 L417.7 375.9 L407.5 382.4 L396.7 387.9 L385.4 392.2 L373.7 395.4 L361.9 397.3 L349.9 398.4 L338.0 398.7 L326.1 398.4 L314.1 397.3 L302.3 395.4 L290.6 392.2 L279.3 387.9 L268.5 382.4 L258.3 375.9 L248.7 368.5 L239.7 360.3 L231.5 351.3 L224.1 341.7 L217.6 331.5 L212.0 320.7 L207.4 309.5 L203.7 298.0 L201.1 286.1 L199.5 274.1 L199.0 262.0 A139.0 139.0 0 0 1 477.0 262.0Z" fill="#e01c1c"/><path d="M476.0 262.0 L475.5 274.0 L473.9 286.0 L471.3 297.7 L467.7 309.2 L463.1 320.3 L457.5 331.0 L451.0 341.2 L443.7 350.7 L435.6 359.6 L426.7 367.7 L417.1 375.0 L407.0 381.5 L396.3 387.0 L385.1 391.3 L373.5 394.5 L361.7 396.4 L349.8 397.4 L338.0 397.7 L326.2 397.4 L314.3 396.4 L302.5 394.5 L290.9 391.3 L279.7 387.0 L269.0 381.5 L258.9 375.0 L249.3 367.7 L240.4 359.6 L232.3 350.7 L225.0 341.2 L218.5 331.0 L212.9 320.3 L208.3 309.2 L204.7 297.7 L202.1 286.0 L200.5 274.0 L200.0 262.0 A138.0 138.0 0 0 1 476.0 262.0Z" fill="#e01c1c"/><path d="M475.0 262.0 L474.5 273.9 L472.9 285.8 L470.3 297.5 L466.7 308.9 L462.2 319.9 L456.6 330.5 L450.2 340.6 L442.9 350.1 L434.9 358.9 L426.1 366.9 L416.6 374.2 L406.5 380.6 L395.8 386.1 L384.7 390.4 L373.2 393.5 L361.5 395.5 L349.8 396.5 L338.0 396.8 L326.2 396.5 L314.5 395.5 L302.8 393.5 L291.3 390.4 L280.2 386.1 L269.5 380.6 L259.4 374.2 L249.9 366.9 L241.1 358.9 L233.1 350.1 L225.8 340.6 L219.4 330.5 L213.8 319.9 L209.3 308.9 L205.7 297.5 L203.1 285.8 L201.5 273.9 L201.0 262.0 A137.0 137.0 0 0 1 475.0 262.0Z" fill="#e01d1c"/><path d="M474.0 262.0 L473.5 273.9 L471.9 285.6 L469.4 297.2 L465.8 308.5 L461.3 319.5 L455.8 330.0 L449.4 340.0 L442.2 349.4 L434.2 358.2 L425.4 366.2 L416.0 373.4 L406.0 379.8 L395.4 385.2 L384.4 389.5 L373.0 392.6 L361.4 394.6 L349.7 395.6 L338.0 395.9 L326.3 395.6 L314.6 394.6 L303.0 392.6 L291.6 389.5 L280.6 385.2 L270.0 379.8 L260.0 373.4 L250.6 366.2 L241.8 358.2 L233.8 349.4 L226.6 340.0 L220.2 330.0 L214.7 319.5 L210.2 308.5 L206.6 297.2 L204.1 285.6 L202.5 273.9 L202.0 262.0 A136.0 136.0 0 0 1 474.0 262.0Z" fill="#df1d1c"/><path d="M473.0 262.0 L472.5 273.8 L470.9 285.4 L468.4 296.9 L464.9 308.2 L460.4 319.1 L454.9 329.5 L448.6 339.4 L441.4 348.8 L433.5 357.5 L424.8 365.4 L415.4 372.6 L405.5 378.9 L395.0 384.2 L384.1 388.5 L372.7 391.6 L361.2 393.6 L349.6 394.7 L338.0 395.0 L326.4 394.7 L314.8 393.6 L303.3 391.6 L291.9 388.5 L281.0 384.2 L270.5 378.9 L260.6 372.6 L251.2 365.4 L242.5 357.5 L234.6 348.8 L227.4 339.4 L221.1 329.5 L215.6 319.1 L211.1 308.2 L207.6 296.9 L205.1 285.4 L203.5 273.8 L203.0 262.0 A135.0 135.0 0 0 1 473.0 262.0Z" fill="#df1e1d"/><path d="M472.0 262.0 L471.5 273.7 L470.0 285.3 L467.4 296.7 L463.9 307.8 L459.4 318.6 L454.0 329.0 L447.8 338.9 L440.6 348.1 L432.8 356.8 L424.1 364.6 L414.9 371.8 L405.0 378.0 L394.6 383.3 L383.7 387.6 L372.5 390.7 L361.0 392.7 L349.5 393.7 L338.0 394.1 L326.5 393.7 L315.0 392.7 L303.5 390.7 L292.3 387.6 L281.4 383.3 L271.0 378.0 L261.1 371.8 L251.9 364.6 L243.2 356.8 L235.4 348.1 L228.2 338.9 L222.0 329.0 L216.6 318.6 L212.1 307.8 L208.6 296.7 L206.0 285.3 L204.5 273.7 L204.0 262.0 A134.0 134.0 0 0 1 472.0 262.0Z" fill="#de1f1d"/><path d="M471.0 262.0 L470.5 273.6 L469.0 285.1 L466.5 296.4 L463.0 307.5 L458.5 318.2 L453.2 328.5 L446.9 338.3 L439.9 347.5 L432.0 356.0 L423.5 363.9 L414.3 370.9 L404.5 377.2 L394.2 382.4 L383.4 386.7 L372.2 389.8 L360.9 391.8 L349.4 392.8 L338.0 393.1 L326.6 392.8 L315.1 391.8 L303.8 389.8 L292.6 386.7 L281.8 382.4 L271.5 377.2 L261.7 370.9 L252.5 363.9 L244.0 356.0 L236.1 347.5 L229.1 338.3 L222.8 328.5 L217.5 318.2 L213.0 307.5 L209.5 296.4 L207.0 285.1 L205.5 273.6 L205.0 262.0 A133.0 133.0 0 0 1 471.0 262.0Z" fill="#de1f1d"/><path d="M470.0 262.0 L469.5 273.5 L468.0 284.9 L465.5 296.2 L462.0 307.1 L457.6 317.8 L452.3 328.0 L446.1 337.7 L439.1 346.8 L431.3 355.3 L422.8 363.1 L413.7 370.1 L404.0 376.3 L393.7 381.5 L383.0 385.7 L372.0 388.8 L360.7 390.8 L349.4 391.9 L338.0 392.2 L326.6 391.9 L315.3 390.8 L304.0 388.8 L293.0 385.7 L282.3 381.5 L272.0 376.3 L262.3 370.1 L253.2 363.1 L244.7 355.3 L236.9 346.8 L229.9 337.7 L223.7 328.0 L218.4 317.8 L214.0 307.1 L210.5 296.2 L208.0 284.9 L206.5 273.5 L206.0 262.0 A132.0 132.0 0 0 1 470.0 262.0Z" fill="#dd201d"/><path d="M469.0 262.0 L468.5 273.4 L467.0 284.7 L464.5 295.9 L461.1 306.8 L456.7 317.4 L451.4 327.5 L445.3 337.1 L438.4 346.2 L430.6 354.6 L422.2 362.4 L413.1 369.3 L403.5 375.4 L393.3 380.6 L382.7 384.8 L371.7 387.9 L360.5 389.9 L349.3 390.9 L338.0 391.3 L326.7 390.9 L315.5 389.9 L304.3 387.9 L293.3 384.8 L282.7 380.6 L272.5 375.4 L262.9 369.3 L253.8 362.4 L245.4 354.6 L237.6 346.2 L230.7 337.1 L224.6 327.5 L219.3 317.4 L214.9 306.8 L211.5 295.9 L209.0 284.7 L207.5 273.4 L207.0 262.0 A131.0 131.0 0 0 1 469.0 262.0Z" fill="#dc221e"/><path d="M468.0 262.0 L467.5 273.3 L466.0 284.6 L463.6 295.6 L460.2 306.5 L455.8 316.9 L450.6 327.0 L444.5 336.6 L437.6 345.6 L429.9 353.9 L421.6 361.6 L412.6 368.5 L403.0 374.6 L392.9 379.7 L382.4 383.9 L371.5 386.9 L360.4 388.9 L349.2 390.0 L338.0 390.3 L326.8 390.0 L315.6 388.9 L304.5 386.9 L293.6 383.9 L283.1 379.7 L273.0 374.6 L263.4 368.5 L254.4 361.6 L246.1 353.9 L238.4 345.6 L231.5 336.6 L225.4 327.0 L220.2 316.9 L215.8 306.5 L212.4 295.6 L210.0 284.6 L208.5 273.3 L208.0 262.0 A130.0 130.0 0 0 1 468.0 262.0Z" fill="#db231e"/><path d="M467.0 262.0 L466.5 273.2 L465.0 284.4 L462.6 295.4 L459.2 306.1 L454.9 316.5 L449.7 326.5 L443.7 336.0 L436.8 344.9 L429.2 353.2 L420.9 360.8 L412.0 367.7 L402.5 373.7 L392.5 378.8 L382.0 383.0 L371.2 386.0 L360.2 388.0 L349.1 389.1 L338.0 389.4 L326.9 389.1 L315.8 388.0 L304.8 386.0 L294.0 383.0 L283.5 378.8 L273.5 373.7 L264.0 367.7 L255.1 360.8 L246.8 353.2 L239.2 344.9 L232.3 336.0 L226.3 326.5 L221.1 316.5 L216.8 306.1 L213.4 295.4 L211.0 284.4 L209.5 273.2 L209.0 262.0 A129.0 129.0 0 0 1 467.0 262.0Z" fill="#da251f"/><path d="M466.0 262.0 L465.5 273.2 L464.1 284.2 L461.6 295.1 L458.3 305.8 L454.0 316.1 L448.9 326.0 L442.9 335.4 L436.1 344.3 L428.5 352.5 L420.3 360.1 L411.4 366.8 L402.0 372.8 L392.1 377.9 L381.7 382.0 L371.0 385.1 L360.0 387.0 L349.0 388.1 L338.0 388.5 L327.0 388.1 L316.0 387.0 L305.0 385.1 L294.3 382.0 L283.9 377.9 L274.0 372.8 L264.6 366.8 L255.7 360.1 L247.5 352.5 L239.9 344.3 L233.1 335.4 L227.1 326.0 L222.0 316.1 L217.7 305.8 L214.4 295.1 L211.9 284.2 L210.5 273.2 L210.0 262.0 A128.0 128.0 0 0 1 466.0 262.0Z" fill="#d92720"/><path d="M465.0 262.0 L464.5 273.1 L463.1 284.1 L460.7 294.9 L457.3 305.4 L453.1 315.7 L448.0 325.5 L442.0 334.8 L435.3 343.6 L427.8 351.8 L419.6 359.3 L410.8 366.0 L401.5 372.0 L391.6 377.0 L381.3 381.1 L370.7 384.1 L359.9 386.1 L349.0 387.2 L338.0 387.5 L327.0 387.2 L316.1 386.1 L305.3 384.1 L294.7 381.1 L284.4 377.0 L274.5 372.0 L265.2 366.0 L256.4 359.3 L248.2 351.8 L240.7 343.6 L234.0 334.8 L228.0 325.5 L222.9 315.7 L218.7 305.4 L215.3 294.9 L212.9 284.1 L211.5 273.1 L211.0 262.0 A127.0 127.0 0 0 1 465.0 262.0Z" fill="#d82920"/><path d="M464.0 262.0 L463.5 273.0 L462.1 283.9 L459.7 294.6 L456.4 305.1 L452.2 315.2 L447.1 325.0 L441.2 334.3 L434.5 343.0 L427.1 351.1 L419.0 358.5 L410.3 365.2 L401.0 371.1 L391.2 376.1 L381.0 380.2 L370.5 383.2 L359.7 385.2 L348.9 386.2 L338.0 386.6 L327.1 386.2 L316.3 385.2 L305.5 383.2 L295.0 380.2 L284.8 376.1 L275.0 371.1 L265.7 365.2 L257.0 358.5 L248.9 351.1 L241.5 343.0 L234.8 334.3 L228.9 325.0 L223.8 315.2 L219.6 305.1 L216.3 294.6 L213.9 283.9 L212.5 273.0 L212.0 262.0 A126.0 126.0 0 0 1 464.0 262.0Z" fill="#d62b21"/><path d="M463.0 262.0 L462.5 272.9 L461.1 283.7 L458.7 294.4 L455.5 304.8 L451.3 314.8 L446.3 324.5 L440.4 333.7 L433.8 342.3 L426.4 350.4 L418.3 357.8 L409.7 364.4 L400.5 370.2 L390.8 375.2 L380.7 379.2 L370.2 382.2 L359.5 384.2 L348.8 385.3 L338.0 385.6 L327.2 385.3 L316.5 384.2 L305.8 382.2 L295.3 379.2 L285.2 375.2 L275.5 370.2 L266.3 364.4 L257.7 357.8 L249.6 350.4 L242.2 342.3 L235.6 333.7 L229.7 324.5 L224.7 314.8 L220.5 304.8 L217.3 294.4 L214.9 283.7 L213.5 272.9 L213.0 262.0 A125.0 125.0 0 0 1 463.0 262.0Z" fill="#d42d22"/><path d="M462.0 262.0 L461.5 272.8 L460.1 283.5 L457.8 294.1 L454.5 304.4 L450.4 314.4 L445.4 324.0 L439.6 333.1 L433.0 341.7 L425.7 349.7 L417.7 357.0 L409.1 363.6 L400.0 369.4 L390.4 374.3 L380.3 378.3 L370.0 381.3 L359.4 383.3 L348.7 384.4 L338.0 384.7 L327.3 384.4 L316.6 383.3 L306.0 381.3 L295.7 378.3 L285.6 374.3 L276.0 369.4 L266.9 363.6 L258.3 357.0 L250.3 349.7 L243.0 341.7 L236.4 333.1 L230.6 324.0 L225.6 314.4 L221.5 304.4 L218.2 294.1 L215.9 283.5 L214.5 272.8 L214.0 262.0 A124.0 124.0 0 0 1 462.0 262.0Z" fill="#d33023"/><path d="M461.0 262.0 L460.5 272.7 L459.1 283.4 L456.8 293.8 L453.6 304.1 L449.5 314.0 L444.5 323.5 L438.8 332.5 L432.2 341.1 L425.0 349.0 L417.1 356.2 L408.5 362.8 L399.5 368.5 L389.9 373.4 L380.0 377.4 L369.7 380.3 L359.2 382.3 L348.6 383.4 L338.0 383.8 L327.4 383.4 L316.8 382.3 L306.3 380.3 L296.0 377.4 L286.1 373.4 L276.5 368.5 L267.5 362.8 L258.9 356.2 L251.0 349.0 L243.8 341.1 L237.2 332.5 L231.5 323.5 L226.5 314.0 L222.4 304.1 L219.2 293.8 L216.9 283.4 L215.5 272.7 L215.0 262.0 A123.0 123.0 0 0 1 461.0 262.0Z" fill="#d13324"/><path d="M460.0 262.0 L459.5 272.6 L458.1 283.2 L455.8 293.6 L452.6 303.7 L448.6 313.6 L443.7 323.0 L437.9 332.0 L431.5 340.4 L424.3 348.3 L416.4 355.5 L408.0 361.9 L399.0 367.6 L389.5 372.5 L379.7 376.4 L369.5 379.4 L359.0 381.4 L348.5 382.5 L338.0 382.8 L327.5 382.5 L317.0 381.4 L306.5 379.4 L296.3 376.4 L286.5 372.5 L277.0 367.6 L268.0 361.9 L259.6 355.5 L251.7 348.3 L244.5 340.4 L238.1 332.0 L232.3 323.0 L227.4 313.6 L223.4 303.7 L220.2 293.6 L217.9 283.2 L216.5 272.6 L216.0 262.0 A122.0 122.0 0 0 1 460.0 262.0Z" fill="#cf3524"/><path d="M459.0 262.0 L458.5 272.5 L457.2 283.0 L454.9 293.3 L451.7 303.4 L447.7 313.1 L442.8 322.5 L437.1 331.4 L430.7 339.8 L423.6 347.6 L415.8 354.7 L407.4 361.1 L398.5 366.8 L389.1 371.6 L379.3 375.5 L369.2 378.4 L358.9 380.4 L348.5 381.5 L338.0 381.9 L327.5 381.5 L317.1 380.4 L306.8 378.4 L296.7 375.5 L286.9 371.6 L277.5 366.8 L268.6 361.1 L260.2 354.7 L252.4 347.6 L245.3 339.8 L238.9 331.4 L233.2 322.5 L228.3 313.1 L224.3 303.4 L221.1 293.3 L218.8 283.0 L217.5 272.5 L217.0 262.0 A121.0 121.0 0 0 1 459.0 262.0Z" fill="#ce3825"/><path d="M458.0 262.0 L457.5 272.5 L456.2 282.8 L453.9 293.1 L450.8 303.0 L446.8 312.7 L441.9 322.0 L436.3 330.8 L429.9 339.1 L422.9 346.9 L415.1 353.9 L406.8 360.3 L398.0 365.9 L388.7 370.7 L379.0 374.6 L368.9 377.5 L358.7 379.5 L348.4 380.6 L338.0 380.9 L327.6 380.6 L317.3 379.5 L307.1 377.5 L297.0 374.6 L287.3 370.7 L278.0 365.9 L269.2 360.3 L260.9 353.9 L253.1 346.9 L246.1 339.1 L239.7 330.8 L234.1 322.0 L229.2 312.7 L225.2 303.0 L222.1 293.1 L219.8 282.8 L218.5 272.5 L218.0 262.0 A120.0 120.0 0 0 1 458.0 262.0Z" fill="#cc3a26"/><path d="M457.0 262.0 L456.5 272.4 L455.2 282.7 L452.9 292.8 L449.8 302.7 L445.9 312.3 L441.1 321.5 L435.5 330.3 L429.2 338.5 L422.1 346.1 L414.5 353.2 L406.3 359.5 L397.5 365.0 L388.3 369.8 L378.6 373.6 L368.7 376.5 L358.5 378.5 L348.3 379.6 L338.0 379.9 L327.7 379.6 L317.5 378.5 L307.3 376.5 L297.4 373.6 L287.7 369.8 L278.5 365.0 L269.7 359.5 L261.5 353.2 L253.9 346.1 L246.8 338.5 L240.5 330.3 L234.9 321.5 L230.1 312.3 L226.2 302.7 L223.1 292.8 L220.8 282.7 L219.5 272.4 L219.0 262.0 A119.0 119.0 0 0 1 457.0 262.0Z" fill="#ca3d27"/><path d="M456.0 262.0 L455.6 272.3 L454.2 282.5 L452.0 292.5 L448.9 302.4 L444.9 311.9 L440.2 321.0 L434.7 329.7 L428.4 337.8 L421.4 345.4 L413.8 352.4 L405.7 358.7 L397.0 364.2 L387.8 368.9 L378.3 372.7 L368.4 375.6 L358.4 377.5 L348.2 378.6 L338.0 379.0 L327.8 378.6 L317.6 377.5 L307.6 375.6 L297.7 372.7 L288.2 368.9 L279.0 364.2 L270.3 358.7 L262.2 352.4 L254.6 345.4 L247.6 337.8 L241.3 329.7 L235.8 321.0 L231.1 311.9 L227.1 302.4 L224.0 292.5 L221.8 282.5 L220.4 272.3 L220.0 262.0 A118.0 118.0 0 0 1 456.0 262.0Z" fill="#c93f28"/><path d="M455.0 262.0 L454.6 272.2 L453.2 282.3 L451.0 292.3 L447.9 302.0 L444.0 311.4 L439.3 320.5 L433.8 329.1 L427.6 337.2 L420.7 344.7 L413.2 351.6 L405.1 357.8 L396.5 363.3 L387.4 368.0 L378.0 371.8 L368.2 374.6 L358.2 376.6 L348.1 377.7 L338.0 378.0 L327.9 377.7 L317.8 376.6 L307.8 374.6 L298.0 371.8 L288.6 368.0 L279.5 363.3 L270.9 357.8 L262.8 351.6 L255.3 344.7 L248.4 337.2 L242.2 329.1 L236.7 320.5 L232.0 311.4 L228.1 302.0 L225.0 292.3 L222.8 282.3 L221.4 272.2 L221.0 262.0 A117.0 117.0 0 0 1 455.0 262.0Z" fill="#c74229"/><path d="M454.0 262.0 L453.6 272.1 L452.2 282.1 L450.0 292.0 L447.0 301.7 L443.1 311.0 L438.5 320.0 L433.0 328.5 L426.9 336.6 L420.0 344.0 L412.6 350.9 L404.5 357.0 L396.0 362.4 L387.0 367.1 L377.6 370.8 L367.9 373.7 L358.0 375.6 L348.0 376.7 L338.0 377.1 L328.0 376.7 L318.0 375.6 L308.1 373.7 L298.4 370.8 L289.0 367.1 L280.0 362.4 L271.5 357.0 L263.4 350.9 L256.0 344.0 L249.1 336.6 L243.0 328.5 L237.5 320.0 L232.9 311.0 L229.0 301.7 L226.0 292.0 L223.8 282.1 L222.4 272.1 L222.0 262.0 A116.0 116.0 0 0 1 454.0 262.0Z" fill="#c5442a"/><path d="M453.0 262.0 L452.6 272.0 L451.3 282.0 L449.1 291.8 L446.1 301.3 L442.2 310.6 L437.6 319.5 L432.2 328.0 L426.1 335.9 L419.3 343.3 L411.9 350.1 L404.0 356.2 L395.5 361.6 L386.6 366.2 L377.3 369.9 L367.7 372.7 L357.9 374.7 L348.0 375.8 L338.0 376.1 L328.0 375.8 L318.1 374.7 L308.3 372.7 L298.7 369.9 L289.4 366.2 L280.5 361.6 L272.0 356.2 L264.1 350.1 L256.7 343.3 L249.9 335.9 L243.8 328.0 L238.4 319.5 L233.8 310.6 L229.9 301.3 L226.9 291.8 L224.7 282.0 L223.4 272.0 L223.0 262.0 A115.0 115.0 0 0 1 453.0 262.0Z" fill="#c4472a"/><path d="M452.0 262.0 L451.6 271.9 L450.3 281.8 L448.1 291.5 L445.1 301.0 L441.3 310.2 L436.7 319.0 L431.4 327.4 L425.3 335.3 L418.6 342.6 L411.3 349.3 L403.4 355.4 L395.0 360.7 L386.2 365.3 L376.9 369.0 L367.4 371.8 L357.7 373.7 L347.9 374.8 L338.0 375.2 L328.1 374.8 L318.3 373.7 L308.6 371.8 L299.1 369.0 L289.8 365.3 L281.0 360.7 L272.6 355.4 L264.7 349.3 L257.4 342.6 L250.7 335.3 L244.6 327.4 L239.3 319.0 L234.7 310.2 L230.9 301.0 L227.9 291.5 L225.7 281.8 L224.4 271.9 L224.0 262.0 A114.0 114.0 0 0 1 452.0 262.0Z" fill="#c2492b"/><path d="M451.0 262.0 L450.6 271.8 L449.3 281.6 L447.1 291.2 L444.2 300.6 L440.4 309.8 L435.9 318.5 L430.6 326.8 L424.6 334.6 L417.9 341.9 L410.6 348.6 L402.8 354.6 L394.5 359.8 L385.7 364.4 L376.6 368.0 L367.2 370.8 L357.5 372.7 L347.8 373.8 L338.0 374.2 L328.2 373.8 L318.5 372.7 L308.8 370.8 L299.4 368.0 L290.3 364.4 L281.5 359.8 L273.2 354.6 L265.4 348.6 L258.1 341.9 L251.4 334.6 L245.4 326.8 L240.1 318.5 L235.6 309.8 L231.8 300.6 L228.9 291.2 L226.7 281.6 L225.4 271.8 L225.0 262.0 A113.0 113.0 0 0 1 451.0 262.0Z" fill="#c04c2c"/><path d="M450.0 262.0 L449.6 271.8 L448.3 281.4 L446.2 291.0 L443.2 300.3 L439.5 309.3 L435.0 318.0 L429.7 326.2 L423.8 334.0 L417.2 341.2 L410.0 347.8 L402.2 353.7 L394.0 359.0 L385.3 363.4 L376.3 367.1 L366.9 369.9 L357.4 371.8 L347.7 372.9 L338.0 373.2 L328.3 372.9 L318.6 371.8 L309.1 369.9 L299.7 367.1 L290.7 363.4 L282.0 359.0 L273.8 353.7 L266.0 347.8 L258.8 341.2 L252.2 334.0 L246.3 326.2 L241.0 318.0 L236.5 309.3 L232.8 300.3 L229.8 291.0 L227.7 281.4 L226.4 271.8 L226.0 262.0 A112.0 112.0 0 0 1 450.0 262.0Z" fill="#be4f2d"/><path d="M448.0 262.0 L447.6 271.6 L446.3 281.1 L444.3 290.5 L441.4 299.6 L437.7 308.5 L433.3 317.0 L428.1 325.1 L422.3 332.7 L415.8 339.8 L408.7 346.3 L401.1 352.1 L393.0 357.2 L384.5 361.6 L375.6 365.2 L366.4 368.0 L357.0 369.9 L347.5 370.9 L338.0 371.3 L328.5 370.9 L319.0 369.9 L309.6 368.0 L300.4 365.2 L291.5 361.6 L283.0 357.2 L274.9 352.1 L267.3 346.3 L260.2 339.8 L253.7 332.7 L247.9 325.1 L242.7 317.0 L238.3 308.5 L234.6 299.6 L231.7 290.5 L229.7 281.1 L228.4 271.6 L228.0 262.0 A110.0 110.0 0 0 1 448.0 262.0Z" fill="#bb542f"/><path d="M446.0 262.0 L445.6 271.4 L444.4 280.8 L442.3 290.0 L439.5 298.9 L435.9 307.6 L431.5 316.0 L426.5 323.9 L420.7 331.4 L414.4 338.4 L407.4 344.7 L399.9 350.5 L392.0 355.5 L383.6 359.8 L374.9 363.4 L365.9 366.1 L356.7 367.9 L347.4 369.0 L338.0 369.4 L328.6 369.0 L319.3 367.9 L310.1 366.1 L301.1 363.4 L292.4 359.8 L284.0 355.5 L276.1 350.5 L268.6 344.7 L261.6 338.4 L255.3 331.4 L249.5 323.9 L244.5 316.0 L240.1 307.6 L236.5 298.9 L233.7 290.0 L231.6 280.8 L230.4 271.4 L230.0 262.0 A108.0 108.0 0 0 1 446.0 262.0Z" fill="#b75a31"/><path d="M444.0 262.0 L443.6 271.2 L442.4 280.4 L440.4 289.4 L437.6 298.3 L434.1 306.8 L429.8 315.0 L424.8 322.8 L419.2 330.1 L413.0 337.0 L406.1 343.2 L398.8 348.8 L391.0 353.8 L382.8 358.0 L374.2 361.5 L365.4 364.1 L356.3 366.0 L347.2 367.1 L338.0 367.4 L328.8 367.1 L319.7 366.0 L310.6 364.1 L301.8 361.5 L293.2 358.0 L285.0 353.8 L277.2 348.8 L269.9 343.2 L263.0 337.0 L256.8 330.1 L251.2 322.8 L246.2 315.0 L241.9 306.8 L238.4 298.3 L235.6 289.4 L233.6 280.4 L232.4 271.2 L232.0 262.0 A106.0 106.0 0 0 1 444.0 262.0Z" fill="#b35f33"/><path d="M442.0 262.0 L441.6 271.1 L440.4 280.1 L438.5 288.9 L435.7 297.6 L432.3 306.0 L428.1 314.0 L423.2 321.7 L417.7 328.8 L411.5 335.5 L404.8 341.7 L397.6 347.2 L390.0 352.1 L381.9 356.2 L373.5 359.6 L364.9 362.2 L356.0 364.1 L347.0 365.1 L338.0 365.5 L329.0 365.1 L320.0 364.1 L311.1 362.2 L302.5 359.6 L294.1 356.2 L286.0 352.1 L278.4 347.2 L271.2 341.7 L264.5 335.5 L258.3 328.8 L252.8 321.7 L247.9 314.0 L243.7 306.0 L240.3 297.6 L237.5 288.9 L235.6 280.1 L234.4 271.1 L234.0 262.0 A104.0 104.0 0 0 1 442.0 262.0Z" fill="#b06534"/><path d="M440.0 262.0 L439.6 270.9 L438.5 279.7 L436.5 288.4 L433.8 296.9 L430.4 305.1 L426.3 313.0 L421.6 320.5 L416.1 327.6 L410.1 334.1 L403.6 340.1 L396.5 345.5 L389.0 350.3 L381.1 354.4 L372.8 357.7 L364.3 360.3 L355.7 362.1 L346.9 363.2 L338.0 363.5 L329.1 363.2 L320.3 362.1 L311.7 360.3 L303.2 357.7 L294.9 354.4 L287.0 350.3 L279.5 345.5 L272.4 340.1 L265.9 334.1 L259.9 327.6 L254.4 320.5 L249.7 313.0 L245.6 305.1 L242.2 296.9 L239.5 288.4 L237.5 279.7 L236.4 270.9 L236.0 262.0 A102.0 102.0 0 0 1 440.0 262.0Z" fill="#ac6a36"/><path d="M438.0 262.0 L437.6 270.7 L436.5 279.4 L434.6 287.9 L432.0 296.2 L428.6 304.3 L424.6 312.0 L419.9 319.4 L414.6 326.3 L408.7 332.7 L402.3 338.6 L395.4 343.9 L388.0 348.6 L380.2 352.6 L372.2 355.9 L363.8 358.4 L355.3 360.2 L346.7 361.2 L338.0 361.6 L329.3 361.2 L320.7 360.2 L312.2 358.4 L303.8 355.9 L295.8 352.6 L288.0 348.6 L280.6 343.9 L273.7 338.6 L267.3 332.7 L261.4 326.3 L256.1 319.4 L251.4 312.0 L247.4 304.3 L244.0 296.2 L241.4 287.9 L239.5 279.4 L238.4 270.7 L238.0 262.0 A100.0 100.0 0 0 1 438.0 262.0Z" fill="#a96f38"/><path d="M436.0 262.0 L435.6 270.5 L434.5 279.0 L432.7 287.4 L430.1 295.5 L426.8 303.4 L422.9 311.0 L418.3 318.2 L413.1 325.0 L407.3 331.3 L401.0 337.1 L394.2 342.3 L387.0 346.9 L379.4 350.8 L371.5 354.0 L363.3 356.5 L355.0 358.2 L346.5 359.3 L338.0 359.6 L329.5 359.3 L321.0 358.2 L312.7 356.5 L304.5 354.0 L296.6 350.8 L289.0 346.9 L281.8 342.3 L275.0 337.1 L268.7 331.3 L262.9 325.0 L257.7 318.2 L253.1 311.0 L249.2 303.4 L245.9 295.5 L243.3 287.4 L241.5 279.0 L240.4 270.5 L240.0 262.0 A98.0 98.0 0 0 1 436.0 262.0Z" fill="#a5753a"/><path d="M434.0 262.0 L433.6 270.4 L432.5 278.7 L430.7 286.8 L428.2 294.8 L425.0 302.6 L421.1 310.0 L416.6 317.1 L411.5 323.7 L405.9 329.9 L399.7 335.5 L393.1 340.6 L386.0 345.1 L378.6 349.0 L370.8 352.1 L362.8 354.6 L354.6 356.3 L346.3 357.3 L338.0 357.6 L329.7 357.3 L321.4 356.3 L313.2 354.6 L305.2 352.1 L297.4 349.0 L290.0 345.1 L282.9 340.6 L276.3 335.5 L270.1 329.9 L264.5 323.7 L259.4 317.1 L254.9 310.0 L251.0 302.6 L247.8 294.8 L245.3 286.8 L243.5 278.7 L242.4 270.4 L242.0 262.0 A96.0 96.0 0 0 1 434.0 262.0Z" fill="#a17a3c"/><path d="M432.0 262.0 L431.6 270.2 L430.6 278.3 L428.8 286.3 L426.3 294.1 L423.2 301.7 L419.4 309.0 L415.0 315.9 L410.0 322.4 L404.5 328.5 L398.4 334.0 L391.9 339.0 L385.0 343.4 L377.7 347.2 L370.1 350.3 L362.3 352.6 L354.3 354.3 L346.2 355.3 L338.0 355.7 L329.8 355.3 L321.7 354.3 L313.7 352.6 L305.9 350.3 L298.3 347.2 L291.0 343.4 L284.1 339.0 L277.6 334.0 L271.5 328.5 L266.0 322.4 L261.0 315.9 L256.6 309.0 L252.8 301.7 L249.7 294.1 L247.2 286.3 L245.4 278.3 L244.4 270.2 L244.0 262.0 A94.0 94.0 0 0 1 432.0 262.0Z" fill="#9e803e"/><path d="M430.0 262.0 L429.6 270.0 L428.6 278.0 L426.9 285.8 L424.5 293.5 L421.4 300.9 L417.7 308.0 L413.4 314.8 L408.5 321.1 L403.1 327.1 L397.1 332.5 L390.8 337.4 L384.0 341.7 L376.9 345.3 L369.4 348.4 L361.8 350.7 L353.9 352.4 L346.0 353.4 L338.0 353.7 L330.0 353.4 L322.1 352.4 L314.2 350.7 L306.6 348.4 L299.1 345.3 L292.0 341.7 L285.2 337.4 L278.9 332.5 L272.9 327.1 L267.5 321.1 L262.6 314.8 L258.3 308.0 L254.6 300.9 L251.5 293.5 L249.1 285.8 L247.4 278.0 L246.4 270.0 L246.0 262.0 A92.0 92.0 0 0 1 430.0 262.0Z" fill="#9b853f"/><path d="M428.0 262.0 L427.7 269.8 L426.6 277.6 L424.9 285.3 L422.6 292.8 L419.6 300.0 L415.9 307.0 L411.7 313.6 L406.9 319.9 L401.6 325.6 L395.8 330.9 L389.6 335.7 L383.0 339.9 L376.0 343.5 L368.8 346.5 L361.3 348.8 L353.6 350.4 L345.8 351.4 L338.0 351.7 L330.2 351.4 L322.4 350.4 L314.7 348.8 L307.2 346.5 L300.0 343.5 L293.0 339.9 L286.4 335.7 L280.2 330.9 L274.4 325.6 L269.1 319.9 L264.3 313.6 L260.1 307.0 L256.4 300.0 L253.4 292.8 L251.1 285.3 L249.4 277.6 L248.3 269.8 L248.0 262.0 A90.0 90.0 0 0 1 428.0 262.0Z" fill="#978a41"/><path d="M426.0 262.0 L425.7 269.7 L424.7 277.3 L423.0 284.8 L420.7 292.1 L417.8 299.2 L414.2 306.0 L410.1 312.5 L405.4 318.6 L400.2 324.2 L394.6 329.4 L388.5 334.1 L382.0 338.2 L375.2 341.7 L368.1 344.6 L360.7 346.9 L353.2 348.5 L345.6 349.4 L338.0 349.7 L330.4 349.4 L322.8 348.5 L315.3 346.9 L307.9 344.6 L300.8 341.7 L294.0 338.2 L287.5 334.1 L281.4 329.4 L275.8 324.2 L270.6 318.6 L265.9 312.5 L261.8 306.0 L258.2 299.2 L255.3 292.1 L253.0 284.8 L251.3 277.3 L250.3 269.7 L250.0 262.0 A88.0 88.0 0 0 1 426.0 262.0Z" fill="#948f43"/><path d="M424.0 262.0 L423.7 269.5 L422.7 276.9 L421.1 284.3 L418.8 291.4 L415.9 298.3 L412.5 305.0 L408.4 311.3 L403.9 317.3 L398.8 322.8 L393.3 327.9 L387.3 332.4 L381.0 336.5 L374.3 339.9 L367.4 342.8 L360.2 345.0 L352.9 346.5 L345.5 347.5 L338.0 347.8 L330.5 347.5 L323.1 346.5 L315.8 345.0 L308.6 342.8 L301.7 339.9 L295.0 336.5 L288.7 332.4 L282.7 327.9 L277.2 322.8 L272.1 317.3 L267.6 311.3 L263.5 305.0 L260.1 298.3 L257.2 291.4 L254.9 284.3 L253.3 276.9 L252.3 269.5 L252.0 262.0 A86.0 86.0 0 0 1 424.0 262.0Z" fill="#919444"/><path d="M422.0 262.0 L421.7 269.3 L420.7 276.6 L419.1 283.7 L416.9 290.7 L414.1 297.5 L410.7 304.0 L406.8 310.2 L402.3 316.0 L397.4 321.4 L392.0 326.3 L386.2 330.8 L380.0 334.7 L373.5 338.1 L366.7 340.9 L359.7 343.0 L352.6 344.6 L345.3 345.5 L338.0 345.8 L330.7 345.5 L323.4 344.6 L316.3 343.0 L309.3 340.9 L302.5 338.1 L296.0 334.7 L289.8 330.8 L284.0 326.3 L278.6 321.4 L273.7 316.0 L269.2 310.2 L265.3 304.0 L261.9 297.5 L259.1 290.7 L256.9 283.7 L255.3 276.6 L254.3 269.3 L254.0 262.0 A84.0 84.0 0 0 1 422.0 262.0Z" fill="#8e9846"/><path d="M420.0 262.0 L419.7 269.1 L418.8 276.2 L417.2 283.2 L415.1 290.0 L412.3 296.7 L409.0 303.0 L405.2 309.0 L400.8 314.7 L396.0 320.0 L390.7 324.8 L385.0 329.2 L379.0 333.0 L372.6 336.3 L366.0 339.0 L359.2 341.1 L352.2 342.6 L345.1 343.5 L338.0 343.8 L330.9 343.5 L323.8 342.6 L316.8 341.1 L310.0 339.0 L303.4 336.3 L297.0 333.0 L291.0 329.2 L285.3 324.8 L280.0 320.0 L275.2 314.7 L270.8 309.0 L267.0 303.0 L263.7 296.7 L260.9 290.0 L258.8 283.2 L257.2 276.2 L256.3 269.1 L256.0 262.0 A82.0 82.0 0 0 1 420.0 262.0Z" fill="#8b9c47"/><path d="M418.0 262.0 L417.7 269.0 L416.8 275.9 L415.3 282.7 L413.2 289.4 L410.5 295.8 L407.3 302.0 L403.5 307.9 L399.3 313.4 L394.6 318.6 L389.4 323.3 L383.9 327.5 L378.0 331.3 L371.8 334.5 L365.3 337.1 L358.7 339.2 L351.9 340.7 L345.0 341.5 L338.0 341.8 L331.0 341.5 L324.1 340.7 L317.3 339.2 L310.7 337.1 L304.2 334.5 L298.0 331.3 L292.1 327.5 L286.6 323.3 L281.4 318.6 L276.7 313.4 L272.5 307.9 L268.7 302.0 L265.5 295.8 L262.8 289.4 L260.7 282.7 L259.2 275.9 L258.3 269.0 L258.0 262.0 A80.0 80.0 0 0 1 418.0 262.0Z" fill="#89a048"/><path d="M416.0 262.0 L415.7 268.8 L414.8 275.5 L413.3 282.2 L411.3 288.7 L408.7 295.0 L405.5 301.0 L401.9 306.7 L397.8 312.1 L393.2 317.2 L388.1 321.8 L382.7 325.9 L377.0 329.5 L371.0 332.7 L364.7 335.3 L358.2 337.3 L351.5 338.7 L344.8 339.6 L338.0 339.8 L331.2 339.6 L324.5 338.7 L317.8 337.3 L311.3 335.3 L305.0 332.7 L299.0 329.5 L293.3 325.9 L287.9 321.8 L282.8 317.2 L278.2 312.1 L274.1 306.7 L270.5 301.0 L267.3 295.0 L264.7 288.7 L262.7 282.2 L261.2 275.5 L260.3 268.8 L260.0 262.0 A78.0 78.0 0 0 1 416.0 262.0Z" fill="#87a349"/><path d="M414.0 262.0 L413.7 268.6 L412.8 275.2 L411.4 281.7 L409.4 288.0 L406.9 294.1 L403.8 300.0 L400.3 305.6 L396.2 310.9 L391.7 315.7 L386.9 320.2 L381.6 324.3 L376.0 327.8 L370.1 330.9 L364.0 333.4 L357.7 335.3 L351.2 336.7 L344.6 337.6 L338.0 337.9 L331.4 337.6 L324.8 336.7 L318.3 335.3 L312.0 333.4 L305.9 330.9 L300.0 327.8 L294.4 324.3 L289.1 320.2 L284.3 315.7 L279.8 310.9 L275.7 305.6 L272.2 300.0 L269.1 294.1 L266.6 288.0 L264.6 281.7 L263.2 275.2 L262.3 268.6 L262.0 262.0 A76.0 76.0 0 0 1 414.0 262.0Z" fill="#85a54a"/><path d="M412.0 262.0 L411.7 268.4 L410.9 274.8 L409.5 281.2 L407.5 287.3 L405.1 293.3 L402.1 299.0 L398.6 304.4 L394.7 309.6 L390.3 314.3 L385.6 318.7 L380.4 322.6 L375.0 326.1 L369.3 329.0 L363.3 331.5 L357.1 333.4 L350.8 334.8 L344.4 335.6 L338.0 335.9 L331.6 335.6 L325.2 334.8 L318.9 333.4 L312.7 331.5 L306.7 329.0 L301.0 326.1 L295.6 322.6 L290.4 318.7 L285.7 314.3 L281.3 309.6 L277.4 304.4 L273.9 299.0 L270.9 293.3 L268.5 287.3 L266.5 281.2 L265.1 274.8 L264.3 268.4 L264.0 262.0 A74.0 74.0 0 0 1 412.0 262.0Z" fill="#83a74b"/><path d="M410.0 262.0 L409.7 268.3 L408.9 274.5 L407.5 280.6 L405.7 286.6 L403.3 292.4 L400.4 298.0 L397.0 303.3 L393.2 308.3 L388.9 312.9 L384.3 317.2 L379.3 321.0 L374.0 324.3 L368.4 327.2 L362.6 329.6 L356.6 331.5 L350.5 332.8 L344.3 333.6 L338.0 333.9 L331.7 333.6 L325.5 332.8 L319.4 331.5 L313.4 329.6 L307.6 327.2 L302.0 324.3 L296.7 321.0 L291.7 317.2 L287.1 312.9 L282.8 308.3 L279.0 303.3 L275.6 298.0 L272.7 292.4 L270.3 286.6 L268.5 280.6 L267.1 274.5 L266.3 268.3 L266.0 262.0 A72.0 72.0 0 0 1 410.0 262.0Z" fill="#82aa4c"/><path d="M408.0 262.0 L407.7 268.1 L406.9 274.2 L405.6 280.1 L403.8 285.9 L401.4 291.6 L398.6 297.0 L395.3 302.2 L391.6 307.0 L387.5 311.5 L383.0 315.6 L378.1 319.3 L373.0 322.6 L367.6 325.4 L361.9 327.7 L356.1 329.6 L350.1 330.9 L344.1 331.6 L338.0 331.9 L331.9 331.6 L325.9 330.9 L319.9 329.6 L314.1 327.7 L308.4 325.4 L303.0 322.6 L297.9 319.3 L293.0 315.6 L288.5 311.5 L284.4 307.0 L280.7 302.2 L277.4 297.0 L274.6 291.6 L272.2 285.9 L270.4 280.1 L269.1 274.2 L268.3 268.1 L268.0 262.0 A70.0 70.0 0 0 1 408.0 262.0Z" fill="#81ac4c"/><path d="M406.0 262.0 L405.7 267.9 L405.0 273.8 L403.7 279.6 L401.9 285.3 L399.6 290.7 L396.9 296.0 L393.7 301.0 L390.1 305.7 L386.1 310.1 L381.7 314.1 L377.0 317.7 L372.0 320.9 L366.7 323.6 L361.2 325.9 L355.6 327.6 L349.8 328.9 L343.9 329.7 L338.0 329.9 L332.1 329.7 L326.2 328.9 L320.4 327.6 L314.8 325.9 L309.3 323.6 L304.0 320.9 L299.0 317.7 L294.3 314.1 L289.9 310.1 L285.9 305.7 L282.3 301.0 L279.1 296.0 L276.4 290.7 L274.1 285.3 L272.3 279.6 L271.0 273.8 L270.3 267.9 L270.0 262.0 A68.0 68.0 0 0 1 406.0 262.0Z" fill="#7fae4d"/><path d="M404.0 262.0 L403.7 267.8 L403.0 273.5 L401.8 279.1 L400.0 284.6 L397.8 289.9 L395.2 295.0 L392.1 299.9 L388.6 304.4 L384.7 308.7 L380.4 312.6 L375.9 316.1 L371.0 319.1 L365.9 321.8 L360.6 324.0 L355.1 325.7 L349.4 326.9 L343.7 327.7 L338.0 327.9 L332.3 327.7 L326.6 326.9 L320.9 325.7 L315.4 324.0 L310.1 321.8 L305.0 319.1 L300.1 316.1 L295.6 312.6 L291.3 308.7 L287.4 304.4 L283.9 299.9 L280.8 295.0 L278.2 289.9 L276.0 284.6 L274.2 279.1 L273.0 273.5 L272.3 267.8 L272.0 262.0 A66.0 66.0 0 0 1 404.0 262.0Z" fill="#7eaf4e"/><path d="M402.0 262.0 L401.8 267.6 L401.0 273.1 L399.8 278.6 L398.1 283.9 L396.0 289.0 L393.4 294.0 L390.4 298.7 L387.0 303.1 L383.3 307.3 L379.1 311.0 L374.7 314.4 L370.0 317.4 L365.0 320.0 L359.9 322.1 L354.6 323.8 L349.1 325.0 L343.6 325.7 L338.0 325.9 L332.4 325.7 L326.9 325.0 L321.4 323.8 L316.1 322.1 L311.0 320.0 L306.0 317.4 L301.3 314.4 L296.9 311.0 L292.7 307.3 L289.0 303.1 L285.6 298.7 L282.6 294.0 L280.0 289.0 L277.9 283.9 L276.2 278.6 L275.0 273.1 L274.2 267.6 L274.0 262.0 A64.0 64.0 0 0 1 402.0 262.0Z" fill="#7eb04e"/><path d="M400.0 262.0 L399.8 267.4 L399.1 272.8 L397.9 278.0 L396.3 283.2 L394.2 288.2 L391.7 293.0 L388.8 297.6 L385.5 301.9 L381.8 305.8 L377.9 309.5 L373.6 312.8 L369.0 315.7 L364.2 318.2 L359.2 320.2 L354.0 321.8 L348.8 323.0 L343.4 323.7 L338.0 323.9 L332.6 323.7 L327.2 323.0 L322.0 321.8 L316.8 320.2 L311.8 318.2 L307.0 315.7 L302.4 312.8 L298.1 309.5 L294.2 305.8 L290.5 301.9 L287.2 297.6 L284.3 293.0 L281.8 288.2 L279.7 283.2 L278.1 278.0 L276.9 272.8 L276.2 267.4 L276.0 262.0 A62.0 62.0 0 0 1 400.0 262.0Z" fill="#7db14e"/><path d="M398.0 262.0 L397.8 267.2 L397.1 272.4 L396.0 277.5 L394.4 282.5 L392.4 287.4 L390.0 292.0 L387.1 296.4 L384.0 300.6 L380.4 304.4 L376.6 308.0 L372.4 311.1 L368.0 314.0 L363.4 316.4 L358.5 318.4 L353.5 319.9 L348.4 321.0 L343.2 321.7 L338.0 321.9 L332.8 321.7 L327.6 321.0 L322.5 319.9 L317.5 318.4 L312.6 316.4 L308.0 314.0 L303.6 311.1 L299.4 308.0 L295.6 304.4 L292.0 300.6 L288.9 296.4 L286.0 292.0 L283.6 287.4 L281.6 282.5 L280.0 277.5 L278.9 272.4 L278.2 267.2 L278.0 262.0 A60.0 60.0 0 0 1 398.0 262.0Z" fill="#7db14e"/><path d="M396.0 262.0 L395.8 267.1 L395.1 272.1 L394.0 277.0 L392.5 281.8 L390.6 286.5 L388.2 291.0 L385.5 295.3 L382.4 299.3 L379.0 303.0 L375.3 306.4 L371.3 309.5 L367.0 312.2 L362.5 314.6 L357.8 316.5 L353.0 318.0 L348.1 319.1 L343.1 319.7 L338.0 319.9 L332.9 319.7 L327.9 319.1 L323.0 318.0 L318.2 316.5 L313.5 314.6 L309.0 312.2 L304.7 309.5 L300.7 306.4 L297.0 303.0 L293.6 299.3 L290.5 295.3 L287.8 291.0 L285.4 286.5 L283.5 281.8 L282.0 277.0 L280.9 272.1 L280.2 267.1 L280.0 262.0 A58.0 58.0 0 0 1 396.0 262.0Z" fill="#7db14e"/><path d="M394.0 262.0 L393.8 266.9 L393.1 271.7 L392.1 276.5 L390.6 281.2 L388.8 285.7 L386.5 290.0 L383.9 294.1 L380.9 298.0 L377.6 301.6 L374.0 304.9 L370.1 307.9 L366.0 310.5 L361.7 312.7 L357.1 314.6 L352.5 316.1 L347.7 317.1 L342.9 317.7 L338.0 317.9 L333.1 317.7 L328.3 317.1 L323.5 316.1 L318.9 314.6 L314.3 312.7 L310.0 310.5 L305.9 307.9 L302.0 304.9 L298.4 301.6 L295.1 298.0 L292.1 294.1 L289.5 290.0 L287.2 285.7 L285.4 281.2 L283.9 276.5 L282.9 271.7 L282.2 266.9 L282.0 262.0 A56.0 56.0 0 0 1 394.0 262.0Z" fill="#7db14e"/><path d="M392.0 262.0 L391.8 266.7 L391.2 271.4 L390.2 276.0 L388.7 280.5 L386.9 284.8 L384.8 289.0 L382.2 293.0 L379.4 296.7 L376.2 300.2 L372.7 303.4 L369.0 306.2 L365.0 308.8 L360.8 310.9 L356.5 312.7 L352.0 314.1 L347.4 315.1 L342.7 315.7 L338.0 316.0 L333.3 315.7 L328.6 315.1 L324.0 314.1 L319.5 312.7 L315.2 310.9 L311.0 308.8 L307.0 306.2 L303.3 303.4 L299.8 300.2 L296.6 296.7 L293.8 293.0 L291.2 289.0 L289.1 284.8 L287.3 280.5 L285.8 276.0 L284.8 271.4 L284.2 266.7 L284.0 262.0 A54.0 54.0 0 0 1 392.0 262.0Z" fill="#7db14e"/><path d="M390.0 262.0 L389.8 266.5 L389.2 271.0 L388.2 275.5 L386.9 279.8 L385.1 284.0 L383.0 288.0 L380.6 291.8 L377.8 295.4 L374.8 298.8 L371.4 301.8 L367.8 304.6 L364.0 307.0 L360.0 309.1 L355.8 310.8 L351.5 312.2 L347.0 313.2 L342.5 313.8 L338.0 314.0 L333.5 313.8 L329.0 313.2 L324.5 312.2 L320.2 310.8 L316.0 309.1 L312.0 307.0 L308.2 304.6 L304.6 301.8 L301.2 298.8 L298.2 295.4 L295.4 291.8 L293.0 288.0 L290.9 284.0 L289.1 279.8 L287.8 275.5 L286.8 271.0 L286.2 266.5 L286.0 262.0 A52.0 52.0 0 0 1 390.0 262.0Z" fill="#7db24e"/><path d="M388.0 262.0 L387.8 266.4 L387.2 270.7 L386.3 274.9 L385.0 279.1 L383.3 283.1 L381.3 287.0 L379.0 290.7 L376.3 294.1 L373.4 297.4 L370.1 300.3 L366.7 303.0 L363.0 305.3 L359.1 307.3 L355.1 309.0 L350.9 310.3 L346.7 311.2 L342.4 311.8 L338.0 312.0 L333.6 311.8 L329.3 311.2 L325.1 310.3 L320.9 309.0 L316.9 307.3 L313.0 305.3 L309.3 303.0 L305.9 300.3 L302.6 297.4 L299.7 294.1 L297.0 290.7 L294.7 287.0 L292.7 283.1 L291.0 279.1 L289.7 274.9 L288.8 270.7 L288.2 266.4 L288.0 262.0 A50.0 50.0 0 0 1 388.0 262.0Z" fill="#7db24e"/><path d="M386.0 262.0 L385.8 266.2 L385.3 270.3 L384.4 274.4 L383.1 278.4 L381.5 282.3 L379.6 286.0 L377.3 289.5 L374.8 292.9 L371.9 295.9 L368.9 298.8 L365.5 301.3 L362.0 303.6 L358.3 305.5 L354.4 307.1 L350.4 308.3 L346.3 309.2 L342.2 309.8 L338.0 310.0 L333.8 309.8 L329.7 309.2 L325.6 308.3 L321.6 307.1 L317.7 305.5 L314.0 303.6 L310.5 301.3 L307.1 298.8 L304.1 295.9 L301.2 292.9 L298.7 289.5 L296.4 286.0 L294.5 282.3 L292.9 278.4 L291.6 274.4 L290.7 270.3 L290.2 266.2 L290.0 262.0 A48.0 48.0 0 0 1 386.0 262.0Z" fill="#7db24e"/><path d="M384.0 262.0 L383.8 266.0 L383.3 270.0 L382.4 273.9 L381.2 277.7 L379.7 281.4 L377.8 285.0 L375.7 288.4 L373.2 291.6 L370.5 294.5 L367.6 297.2 L364.4 299.7 L361.0 301.8 L357.4 303.7 L353.7 305.2 L349.9 306.4 L346.0 307.3 L342.0 307.8 L338.0 308.0 L334.0 307.8 L330.0 307.3 L326.1 306.4 L322.3 305.2 L318.6 303.7 L315.0 301.8 L311.6 299.7 L308.4 297.2 L305.5 294.5 L302.8 291.6 L300.3 288.4 L298.2 285.0 L296.3 281.4 L294.8 277.7 L293.6 273.9 L292.7 270.0 L292.2 266.0 L292.0 262.0 A46.0 46.0 0 0 1 384.0 262.0Z" fill="#7db24e"/><path d="M382.0 262.0 L381.8 265.8 L381.3 269.6 L380.5 273.4 L379.3 277.0 L377.9 280.6 L376.1 284.0 L374.0 287.2 L371.7 290.3 L369.1 293.1 L366.3 295.7 L363.2 298.0 L360.0 300.1 L356.6 301.9 L353.0 303.3 L349.4 304.5 L345.6 305.3 L341.8 305.8 L338.0 306.0 L334.2 305.8 L330.4 305.3 L326.6 304.5 L323.0 303.3 L319.4 301.9 L316.0 300.1 L312.8 298.0 L309.7 295.7 L306.9 293.1 L304.3 290.3 L302.0 287.2 L299.9 284.0 L298.1 280.6 L296.7 277.0 L295.5 273.4 L294.7 269.6 L294.2 265.8 L294.0 262.0 A44.0 44.0 0 0 1 382.0 262.0Z" fill="#7db24e"/><path d="M380.0 262.0 L379.8 265.7 L379.4 269.3 L378.6 272.9 L377.5 276.4 L376.1 279.7 L374.4 283.0 L372.4 286.1 L370.2 289.0 L367.7 291.7 L365.0 294.2 L362.1 296.4 L359.0 298.4 L355.7 300.1 L352.4 301.5 L348.9 302.6 L345.3 303.3 L341.7 303.8 L338.0 304.0 L334.3 303.8 L330.7 303.3 L327.1 302.6 L323.6 301.5 L320.3 300.1 L317.0 298.4 L313.9 296.4 L311.0 294.2 L308.3 291.7 L305.8 289.0 L303.6 286.1 L301.6 283.0 L299.9 279.7 L298.5 276.4 L297.4 272.9 L296.6 269.3 L296.2 265.7 L296.0 262.0 A42.0 42.0 0 0 1 380.0 262.0Z" fill="#7db14e"/><path d="M378.0 262.0 L377.8 265.5 L377.4 268.9 L376.6 272.4 L375.6 275.7 L374.3 278.9 L372.6 282.0 L370.8 284.9 L368.6 287.7 L366.3 290.3 L363.7 292.6 L360.9 294.8 L358.0 296.6 L354.9 298.2 L351.7 299.6 L348.3 300.6 L344.9 301.4 L341.5 301.8 L338.0 302.0 L334.5 301.8 L331.1 301.4 L327.7 300.6 L324.3 299.6 L321.1 298.2 L318.0 296.6 L315.1 294.8 L312.3 292.6 L309.7 290.3 L307.4 287.7 L305.2 284.9 L303.4 282.0 L301.7 278.9 L300.4 275.7 L299.4 272.4 L298.6 268.9 L298.2 265.5 L298.0 262.0 A40.0 40.0 0 0 1 378.0 262.0Z" fill="#7eb04e"/><path d="M376.0 262.0 L375.9 265.3 L375.4 268.6 L374.7 271.8 L373.7 275.0 L372.4 278.1 L370.9 281.0 L369.1 283.8 L367.1 286.4 L364.9 288.9 L362.4 291.1 L359.8 293.1 L357.0 294.9 L354.1 296.4 L351.0 297.7 L347.8 298.7 L344.6 299.4 L341.3 299.8 L338.0 300.0 L334.7 299.8 L331.4 299.4 L328.2 298.7 L325.0 297.7 L321.9 296.4 L319.0 294.9 L316.2 293.1 L313.6 291.1 L311.1 288.9 L308.9 286.4 L306.9 283.8 L305.1 281.0 L303.6 278.1 L302.3 275.0 L301.3 271.8 L300.6 268.6 L300.1 265.3 L300.0 262.0 A38.0 38.0 0 0 1 376.0 262.0Z" fill="#7faf4d"/><path d="M374.0 262.0 L373.9 265.1 L373.5 268.3 L372.8 271.3 L371.8 274.3 L370.6 277.2 L369.2 280.0 L367.5 282.6 L365.6 285.1 L363.5 287.5 L361.1 289.6 L358.6 291.5 L356.0 293.2 L353.2 294.6 L350.3 295.8 L347.3 296.8 L344.2 297.4 L341.1 297.8 L338.0 298.0 L334.9 297.8 L331.8 297.4 L328.7 296.8 L325.7 295.8 L322.8 294.6 L320.0 293.2 L317.4 291.5 L314.9 289.6 L312.5 287.5 L310.4 285.1 L308.5 282.6 L306.8 280.0 L305.4 277.2 L304.2 274.3 L303.2 271.3 L302.5 268.3 L302.1 265.1 L302.0 262.0 A36.0 36.0 0 0 1 374.0 262.0Z" fill="#80ad4d"/><path d="M372.0 262.0 L371.9 265.0 L371.5 267.9 L370.8 270.8 L369.9 273.6 L368.8 276.4 L367.4 279.0 L365.9 281.5 L364.0 283.9 L362.0 286.0 L359.9 288.0 L357.5 289.8 L355.0 291.4 L352.4 292.8 L349.6 293.9 L346.8 294.8 L343.9 295.5 L341.0 295.9 L338.0 296.0 L335.0 295.9 L332.1 295.5 L329.2 294.8 L326.4 293.9 L323.6 292.8 L321.0 291.4 L318.5 289.8 L316.1 288.0 L314.0 286.0 L312.0 283.9 L310.1 281.5 L308.6 279.0 L307.2 276.4 L306.1 273.6 L305.2 270.8 L304.5 267.9 L304.1 265.0 L304.0 262.0 A34.0 34.0 0 0 1 372.0 262.0Z" fill="#81ab4c"/><path d="M370.0 262.0 L369.9 264.8 L369.5 267.6 L368.9 270.3 L368.1 272.9 L367.0 275.5 L365.7 278.0 L364.2 280.4 L362.5 282.6 L360.6 284.6 L358.6 286.5 L356.4 288.2 L354.0 289.7 L351.5 291.0 L348.9 292.1 L346.3 292.9 L343.6 293.5 L340.8 293.9 L338.0 294.0 L335.2 293.9 L332.4 293.5 L329.7 292.9 L327.1 292.1 L324.5 291.0 L322.0 289.7 L319.6 288.2 L317.4 286.5 L315.4 284.6 L313.5 282.6 L311.8 280.4 L310.3 278.0 L309.0 275.5 L307.9 272.9 L307.1 270.3 L306.5 267.6 L306.1 264.8 L306.0 262.0 A32.0 32.0 0 0 1 370.0 262.0Z" fill="#82a94b"/><path d="M368.0 262.0 L367.9 264.6 L367.5 267.2 L367.0 269.8 L366.2 272.3 L365.2 274.7 L364.0 277.0 L362.6 279.2 L361.0 281.3 L359.2 283.2 L357.3 285.0 L355.2 286.6 L353.0 288.0 L350.7 289.2 L348.3 290.2 L345.8 291.0 L343.2 291.5 L340.6 291.9 L338.0 292.0 L335.4 291.9 L332.8 291.5 L330.2 291.0 L327.7 290.2 L325.3 289.2 L323.0 288.0 L320.8 286.6 L318.7 285.0 L316.8 283.2 L315.0 281.3 L313.4 279.2 L312.0 277.0 L310.8 274.7 L309.8 272.3 L309.0 269.8 L308.5 267.2 L308.1 264.6 L308.0 262.0 A30.0 30.0 0 0 1 368.0 262.0Z" fill="#84a74b"/><path d="M366.0 262.0 L365.9 264.4 L365.6 266.9 L365.0 269.2 L364.3 271.6 L363.4 273.8 L362.2 276.0 L360.9 278.1 L359.4 280.0 L357.8 281.8 L356.0 283.4 L354.1 284.9 L352.0 286.2 L349.8 287.4 L347.6 288.3 L345.2 289.0 L342.9 289.6 L340.4 289.9 L338.0 290.0 L335.6 289.9 L333.1 289.6 L330.8 289.0 L328.4 288.3 L326.2 287.4 L324.0 286.2 L321.9 284.9 L320.0 283.4 L318.2 281.8 L316.6 280.0 L315.1 278.1 L313.8 276.0 L312.6 273.8 L311.7 271.6 L311.0 269.2 L310.4 266.9 L310.1 264.4 L310.0 262.0 A28.0 28.0 0 0 1 366.0 262.0Z" fill="#85a54a"/><path d="M364.0 262.0 L363.9 264.3 L363.6 266.5 L363.1 268.7 L362.4 270.9 L361.6 273.0 L360.5 275.0 L359.3 276.9 L357.9 278.7 L356.4 280.4 L354.7 281.9 L352.9 283.3 L351.0 284.5 L349.0 285.6 L346.9 286.4 L344.7 287.1 L342.5 287.6 L340.3 287.9 L338.0 288.0 L335.7 287.9 L333.5 287.6 L331.3 287.1 L329.1 286.4 L327.0 285.6 L325.0 284.5 L323.1 283.3 L321.3 281.9 L319.6 280.4 L318.1 278.7 L316.7 276.9 L315.5 275.0 L314.4 273.0 L313.6 270.9 L312.9 268.7 L312.4 266.5 L312.1 264.3 L312.0 262.0 A26.0 26.0 0 0 1 364.0 262.0Z" fill="#86a349"/><path d="M362.0 262.0 L361.9 264.1 L361.6 266.2 L361.2 268.2 L360.6 270.2 L359.8 272.1 L358.8 274.0 L357.7 275.8 L356.4 277.4 L355.0 279.0 L353.4 280.4 L351.8 281.7 L350.0 282.8 L348.1 283.7 L346.2 284.5 L344.2 285.2 L342.2 285.6 L340.1 285.9 L338.0 286.0 L335.9 285.9 L333.8 285.6 L331.8 285.2 L329.8 284.5 L327.9 283.7 L326.0 282.8 L324.2 281.7 L322.6 280.4 L321.0 279.0 L319.6 277.4 L318.3 275.8 L317.2 274.0 L316.2 272.1 L315.4 270.2 L314.8 268.2 L314.4 266.2 L314.1 264.1 L314.0 262.0 A24.0 24.0 0 0 1 362.0 262.0Z" fill="#88a149"/><path d="M360.0 262.0 L359.9 263.9 L359.7 265.8 L359.3 267.7 L358.7 269.5 L357.9 271.3 L357.1 273.0 L356.0 274.6 L354.9 276.1 L353.6 277.6 L352.1 278.9 L350.6 280.0 L349.0 281.0 L347.3 281.9 L345.5 282.7 L343.7 283.2 L341.8 283.7 L339.9 283.9 L338.0 284.0 L336.1 283.9 L334.2 283.7 L332.3 283.2 L330.5 282.7 L328.7 281.9 L327.0 281.0 L325.4 280.0 L323.9 278.9 L322.4 277.6 L321.1 276.1 L320.0 274.6 L318.9 273.0 L318.1 271.3 L317.3 269.5 L316.7 267.7 L316.3 265.8 L316.1 263.9 L316.0 262.0 A22.0 22.0 0 0 1 360.0 262.0Z" fill="#8a9e48"/><path d="M358.0 262.0 L357.9 263.7 L357.7 265.5 L357.3 267.2 L356.8 268.8 L356.1 270.5 L355.3 272.0 L354.4 273.5 L353.3 274.9 L352.1 276.1 L350.9 277.3 L349.5 278.4 L348.0 279.3 L346.5 280.1 L344.8 280.8 L343.2 281.3 L341.5 281.7 L339.7 281.9 L338.0 282.0 L336.3 281.9 L334.5 281.7 L332.8 281.3 L331.2 280.8 L329.5 280.1 L328.0 279.3 L326.5 278.4 L325.1 277.3 L323.9 276.1 L322.7 274.9 L321.6 273.5 L320.7 272.0 L319.9 270.5 L319.2 268.8 L318.7 267.2 L318.3 265.5 L318.1 263.7 L318.0 262.0 A20.0 20.0 0 0 1 358.0 262.0Z" fill="#8c9b47"/><path d="M356.0 262.0 L355.9 263.6 L355.7 265.1 L355.4 266.7 L354.9 268.2 L354.3 269.6 L353.6 271.0 L352.7 272.3 L351.8 273.6 L350.7 274.7 L349.6 275.8 L348.3 276.7 L347.0 277.6 L345.6 278.3 L344.2 278.9 L342.7 279.4 L341.1 279.7 L339.6 279.9 L338.0 280.0 L336.4 279.9 L334.9 279.7 L333.3 279.4 L331.8 278.9 L330.4 278.3 L329.0 277.6 L327.7 276.7 L326.4 275.8 L325.3 274.7 L324.2 273.6 L323.3 272.3 L322.4 271.0 L321.7 269.6 L321.1 268.2 L320.6 266.7 L320.3 265.1 L320.1 263.6 L320.0 262.0 A18.0 18.0 0 0 1 356.0 262.0Z" fill="#8d9846"/><path d="M354.0 262.0 L353.9 263.4 L353.8 264.8 L353.5 266.1 L353.0 267.5 L352.5 268.8 L351.9 270.0 L351.1 271.2 L350.3 272.3 L349.3 273.3 L348.3 274.3 L347.2 275.1 L346.0 275.9 L344.8 276.5 L343.5 277.0 L342.1 277.4 L340.8 277.8 L339.4 277.9 L338.0 278.0 L336.6 277.9 L335.2 277.8 L333.9 277.4 L332.5 277.0 L331.2 276.5 L330.0 275.9 L328.8 275.1 L327.7 274.3 L326.7 273.3 L325.7 272.3 L324.9 271.2 L324.1 270.0 L323.5 268.8 L323.0 267.5 L322.5 266.1 L322.2 264.8 L322.1 263.4 L322.0 262.0 A16.0 16.0 0 0 1 354.0 262.0Z" fill="#909545"/><path d="M352.0 262.0 L351.9 263.2 L351.8 264.4 L351.5 265.6 L351.2 266.8 L350.7 267.9 L350.1 269.0 L349.5 270.0 L348.7 271.0 L347.9 271.9 L347.0 272.7 L346.0 273.5 L345.0 274.1 L343.9 274.7 L342.8 275.2 L341.6 275.5 L340.4 275.8 L339.2 275.9 L338.0 276.0 L336.8 275.9 L335.6 275.8 L334.4 275.5 L333.2 275.2 L332.1 274.7 L331.0 274.1 L330.0 273.5 L329.0 272.7 L328.1 271.9 L327.3 271.0 L326.5 270.0 L325.9 269.0 L325.3 267.9 L324.8 266.8 L324.5 265.6 L324.2 264.4 L324.1 263.2 L324.0 262.0 A14.0 14.0 0 0 1 352.0 262.0Z" fill="#929244"/><path d="M350.0 262.0 L350.0 263.0 L349.8 264.1 L349.6 265.1 L349.3 266.1 L348.9 267.1 L348.4 268.0 L347.8 268.9 L347.2 269.7 L346.5 270.5 L345.7 271.2 L344.9 271.8 L344.0 272.4 L343.1 272.9 L342.1 273.3 L341.1 273.6 L340.1 273.8 L339.0 273.9 L338.0 274.0 L337.0 273.9 L335.9 273.8 L334.9 273.6 L333.9 273.3 L332.9 272.9 L332.0 272.4 L331.1 271.8 L330.3 271.2 L329.5 270.5 L328.8 269.7 L328.2 268.9 L327.6 268.0 L327.1 267.1 L326.7 266.1 L326.4 265.1 L326.2 264.1 L326.0 263.0 L326.0 262.0 A12.0 12.0 0 0 1 350.0 262.0Z" fill="#948f43"/><path d="M348.0 262.0 L348.0 262.9 L347.8 263.7 L347.7 264.6 L347.4 265.4 L347.1 266.2 L346.7 267.0 L346.2 267.7 L345.7 268.4 L345.1 269.1 L344.4 269.7 L343.7 270.2 L343.0 270.7 L342.2 271.1 L341.4 271.4 L340.6 271.7 L339.7 271.8 L338.9 272.0 L338.0 272.0 L337.1 272.0 L336.3 271.8 L335.4 271.7 L334.6 271.4 L333.8 271.1 L333.0 270.7 L332.3 270.2 L331.6 269.7 L330.9 269.1 L330.3 268.4 L329.8 267.7 L329.3 267.0 L328.9 266.2 L328.6 265.4 L328.3 264.6 L328.2 263.7 L328.0 262.9 L328.0 262.0 A10.0 10.0 0 0 1 348.0 262.0Z" fill="#968c42"/><path d="M346.0 262.0 L346.0 262.7 L345.9 263.4 L345.7 264.1 L345.5 264.7 L345.2 265.4 L344.9 266.0 L344.6 266.6 L344.1 267.1 L343.7 267.7 L343.1 268.1 L342.6 268.6 L342.0 268.9 L341.4 269.2 L340.7 269.5 L340.1 269.7 L339.4 269.9 L338.7 270.0 L338.0 270.0 L337.3 270.0 L336.6 269.9 L335.9 269.7 L335.3 269.5 L334.6 269.2 L334.0 268.9 L333.4 268.6 L332.9 268.1 L332.3 267.7 L331.9 267.1 L331.4 266.6 L331.1 266.0 L330.8 265.4 L330.5 264.7 L330.3 264.1 L330.1 263.4 L330.0 262.7 L330.0 262.0 A8.0 8.0 0 0 1 346.0 262.0Z" fill="#988941"/><path d="M344.0 262.0 L344.0 262.5 L343.9 263.0 L343.8 263.6 L343.6 264.1 L343.4 264.5 L343.2 265.0 L342.9 265.4 L342.6 265.9 L342.2 266.2 L341.9 266.6 L341.4 266.9 L341.0 267.2 L340.5 267.4 L340.1 267.6 L339.6 267.8 L339.0 267.9 L338.5 268.0 L338.0 268.0 L337.5 268.0 L337.0 267.9 L336.4 267.8 L335.9 267.6 L335.5 267.4 L335.0 267.2 L334.6 266.9 L334.1 266.6 L333.8 266.2 L333.4 265.9 L333.1 265.4 L332.8 265.0 L332.6 264.5 L332.4 264.1 L332.2 263.6 L332.1 263.0 L332.0 262.5 L332.0 262.0 A6.0 6.0 0 0 1 344.0 262.0Z" fill="#998740"/><path d="M342.0 262.0 L342.0 262.3 L341.9 262.7 L341.9 263.0 L341.8 263.4 L341.6 263.7 L341.5 264.0 L341.3 264.3 L341.1 264.6 L340.8 264.8 L340.6 265.1 L340.3 265.3 L340.0 265.5 L339.7 265.6 L339.4 265.8 L339.0 265.9 L338.7 265.9 L338.3 266.0 L338.0 266.0 L337.7 266.0 L337.3 265.9 L337.0 265.9 L336.6 265.8 L336.3 265.6 L336.0 265.5 L335.7 265.3 L335.4 265.1 L335.2 264.8 L334.9 264.6 L334.7 264.3 L334.5 264.0 L334.4 263.7 L334.2 263.4 L334.1 263.0 L334.1 262.7 L334.0 262.3 L334.0 262.0 A4.0 4.0 0 0 1 342.0 262.0Z" fill="#9b843f"/><path d="M340.0 262.0 L340.0 262.2 L340.0 262.3 L339.9 262.5 L339.9 262.7 L339.8 262.8 L339.7 263.0 L339.6 263.1 L339.5 263.3 L339.4 263.4 L339.3 263.5 L339.1 263.6 L339.0 263.7 L338.8 263.8 L338.7 263.9 L338.5 263.9 L338.3 264.0 L338.2 264.0 L338.0 264.0 L337.8 264.0 L337.7 264.0 L337.5 263.9 L337.3 263.9 L337.2 263.8 L337.0 263.7 L336.9 263.6 L336.7 263.5 L336.6 263.4 L336.5 263.3 L336.4 263.1 L336.3 263.0 L336.2 262.8 L336.1 262.7 L336.1 262.5 L336.0 262.3 L336.0 262.2 L336.0 262.0 A2.0 2.0 0 0 1 340.0 262.0Z" fill="#9c823e"/></svg>
<div class="dot" style="left:336.1px;top:92.0px"></div>
<div class="lbl" style="left:337.6px;top:93.6px"><i style="display:inline-block;width:4.33px;text-align:center;font-style:normal">1</i><i style="display:inline-block;width:4.33px;text-align:center;font-style:normal">0</i><i style="display:inline-block;width:4.33px;text-align:center;font-style:normal">0</i><i style="display:inline-block;width:4.33px;text-align:center;font-style:normal">.</i><i style="display:inline-block;width:4.33px;text-align:center;font-style:normal">2</i><i style="display:inline-block;width:4.33px;text-align:center;font-style:normal">7</i></div>
<div class="dot" style="left:251.6px;top:114.7px"></div>
<div class="lbl" style="left:253.1px;top:116.3px"><i style="display:inline-block;width:4.33px;text-align:center;font-style:normal">1</i><i style="display:inline-block;width:4.33px;text-align:center;font-style:normal">0</i><i style="display:inline-block;width:4.33px;text-align:center;font-style:normal">0</i><i style="display:inline-block;width:4.33px;text-align:center;font-style:normal">.</i><i style="display:inline-block;width:4.33px;text-align:center;font-style:normal">2</i><i style="display:inline-block;width:4.33px;text-align:center;font-style:normal">7</i></div>
<div class="dot" style="left:420.6px;top:114.7px"></div>
<div class="lbl" style="left:422.1px;top:116.3px"><i style="display:inline-block;width:4.33px;text-align:center;font-style:normal">1</i><i style="display:inline-block;width:4.33px;text-align:center;font-style:normal">0</i><i style="display:inline-block;width:4.33px;text-align:center;font-style:normal">0</i><i style="display:inline-block;width:4.33px;text-align:center;font-style:normal">.</i><i style="display:inline-block;width:4.33px;text-align:center;font-style:normal">2</i><i style="display:inline-block;width:4.33px;text-align:center;font-style:normal">7</i></div>
<div class="dot" style="left:189.8px;top:176.5px"></div>
<div class="lbl" style="left:191.3px;top:178.1px"><i style="display:inline-block;width:4.33px;text-align:center;font-style:normal">1</i><i style="display:inline-block;width:4.33px;text-align:center;font-style:normal">0</i><i style="display:inline-block;width:4.33px;text-align:center;font-style:normal">0</i><i style="display:inline-block;width:4.33px;text-align:center;font-style:normal">.</i><i style="display:inline-block;width:4.33px;text-align:center;font-style:normal">2</i><i style="display:inline-block;width:4.33px;text-align:center;font-style:normal">8</i></div>
<div class="dot" style="left:336.1px;top:176.5px"></div>
<div class="lbl" style="left:337.6px;top:178.1px"><i style="display:inline-block;width:4.33px;text-align:center;font-style:normal">1</i><i style="display:inline-block;width:4.33px;text-align:center;font-style:normal">0</i><i style="display:inline-block;width:4.33px;text-align:center;font-style:normal">0</i><i style="display:inline-block;width:4.33px;text-align:center;font-style:normal">.</i><i style="display:inline-block;width:4.33px;text-align:center;font-style:normal">3</i><i style="display:inline-block;width:4.33px;text-align:center;font-style:normal">0</i></div>
<div class="dot" style="left:482.4px;top:176.5px"></div>
<div class="lbl" style="left:483.9px;top:178.1px"><i style="display:inline-block;width:4.33px;text-align:center;font-style:normal">1</i><i style="display:inline-block;width:4.33px;text-align:center;font-style:normal">0</i><i style="display:inline-block;width:4.33px;text-align:center;font-style:normal">0</i><i style="display:inline-block;width:4.33px;text-align:center;font-style:normal">.</i><i style="display:inline-block;width:4.33px;text-align:center;font-style:normal">2</i><i style="display:inline-block;width:4.33px;text-align:center;font-style:normal">7</i></div>
<div class="dot" style="left:276.3px;top:201.2px"></div>
<div class="lbl" style="left:277.8px;top:202.8px"><i style="display:inline-block;width:4.33px;text-align:center;font-style:normal">1</i><i style="display:inline-block;width:4.33px;text-align:center;font-style:normal">0</i><i style="display:inline-block;width:4.33px;text-align:center;font-style:normal">0</i><i style="display:inline-block;width:4.33px;text-align:center;font-style:normal">.</i><i style="display:inline-block;width:4.33px;text-align:center;font-style:normal">2</i><i style="display:inline-block;width:4.33px;text-align:center;font-style:normal">8</i></div>
<div class="dot" style="left:395.9px;top:201.2px"></div>
<div class="lbl" style="left:397.4px;top:202.8px"><i style="display:inline-block;width:4.33px;text-align:center;font-style:normal">1</i><i style="display:inline-block;width:4.33px;text-align:center;font-style:normal">0</i><i style="display:inline-block;width:4.33px;text-align:center;font-style:normal">0</i><i style="display:inline-block;width:4.33px;text-align:center;font-style:normal">.</i><i style="display:inline-block;width:4.33px;text-align:center;font-style:normal">2</i><i style="display:inline-block;width:4.33px;text-align:center;font-style:normal">6</i></div>
<div class="dot" style="left:167.1px;top:261.0px"></div>
<div class="lbl" style="left:168.6px;top:262.6px"><i style="display:inline-block;width:4.33px;text-align:center;font-style:normal">1</i><i style="display:inline-block;width:4.33px;text-align:center;font-style:normal">0</i><i style="display:inline-block;width:4.33px;text-align:center;font-style:normal">0</i><i style="display:inline-block;width:4.33px;text-align:center;font-style:normal">.</i><i style="display:inline-block;width:4.33px;text-align:center;font-style:normal">2</i><i style="display:inline-block;width:4.33px;text-align:center;font-style:normal">7</i></div>
<div class="dot" style="left:251.6px;top:261.0px"></div>
<div class="lbl" style="left:253.1px;top:262.6px"><i style="display:inline-block;width:4.33px;text-align:center;font-style:normal">1</i><i style="display:inline-block;width:4.33px;text-align:center;font-style:normal">0</i><i style="display:inline-block;width:4.33px;text-align:center;font-style:normal">0</i><i style="display:inline-block;width:4.33px;text-align:center;font-style:normal">.</i><i style="display:inline-block;width:4.33px;text-align:center;font-style:normal">2</i><i style="display:inline-block;width:4.33px;text-align:center;font-style:normal">8</i></div>
<div class="dot" style="left:336.1px;top:261.0px"></div>
<div class="lbl" style="left:337.6px;top:262.6px"><i style="display:inline-block;width:4.33px;text-align:center;font-style:normal">1</i><i style="display:inline-block;width:4.33px;text-align:center;font-style:normal">0</i><i style="display:inline-block;width:4.33px;text-align:center;font-style:normal">0</i><i style="display:inline-block;width:4.33px;text-align:center;font-style:normal">.</i><i style="display:inline-block;width:4.33px;text-align:center;font-style:normal">2</i><i style="display:inline-block;width:4.33px;text-align:center;font-style:normal">8</i></div>
<div class="dot" style="left:420.6px;top:261.0px"></div>
<div class="lbl" style="left:422.1px;top:262.6px"><i style="display:inline-block;width:4.33px;text-align:center;font-style:normal">1</i><i style="display:inline-block;width:4.33px;text-align:center;font-style:normal">0</i><i style="display:inline-block;width:4.33px;text-align:center;font-style:normal">0</i><i style="display:inline-block;width:4.33px;text-align:center;font-style:normal">.</i><i style="display:inline-block;width:4.33px;text-align:center;font-style:normal">2</i><i style="display:inline-block;width:4.33px;text-align:center;font-style:normal">7</i></div>
<div class="dot" style="left:505.1px;top:261.0px"></div>
<div class="lbl" style="left:506.6px;top:262.6px"><i style="display:inline-block;width:4.33px;text-align:center;font-style:normal">1</i><i style="display:inline-block;width:4.33px;text-align:center;font-style:normal">0</i><i style="display:inline-block;width:4.33px;text-align:center;font-style:normal">0</i><i style="display:inline-block;width:4.33px;text-align:center;font-style:normal">.</i><i style="display:inline-block;width:4.33px;text-align:center;font-style:normal">2</i><i style="display:inline-block;width:4.33px;text-align:center;font-style:normal">8</i></div>
<div class="dot" style="left:276.3px;top:320.8px"></div>
<div class="lbl" style="left:277.8px;top:322.4px"><i style="display:inline-block;width:4.33px;text-align:center;font-style:normal">1</i><i style="display:inline-block;width:4.33px;text-align:center;font-style:normal">0</i><i style="display:inline-block;width:4.33px;text-align:center;font-style:normal">0</i><i style="display:inline-block;width:4.33px;text-align:center;font-style:normal">.</i><i style="display:inline-block;width:4.33px;text-align:center;font-style:normal">2</i><i style="display:inline-block;width:4.33px;text-align:center;font-style:normal">7</i></div>
<div class="dot" style="left:395.9px;top:320.8px"></div>
<div class="lbl" style="left:397.4px;top:322.4px"><i style="display:inline-block;width:4.33px;text-align:center;font-style:normal">1</i><i style="display:inline-block;width:4.33px;text-align:center;font-style:normal">0</i><i style="display:inline-block;width:4.33px;text-align:center;font-style:normal">0</i><i style="display:inline-block;width:4.33px;text-align:center;font-style:normal">.</i><i style="display:inline-block;width:4.33px;text-align:center;font-style:normal">2</i><i style="display:inline-block;width:4.33px;text-align:center;font-style:normal">8</i></div>
<div class="dot" style="left:189.8px;top:345.5px"></div>
<div class="lbl" style="left:191.3px;top:347.1px"><i style="display:inline-block;width:4.33px;text-align:center;font-style:normal">1</i><i style="display:inline-block;width:4.33px;text-align:center;font-style:normal">0</i><i style="display:inline-block;width:4.33px;text-align:center;font-style:normal">0</i><i style="display:inline-block;width:4.33px;text-align:center;font-style:normal">.</i><i style="display:inline-block;width:4.33px;text-align:center;font-style:normal">2</i><i style="display:inline-block;width:4.33px;text-align:center;font-style:normal">7</i></div>
<div class="dot" style="left:336.1px;top:345.5px"></div>
<div class="lbl" style="left:337.6px;top:347.1px"><i style="display:inline-block;width:4.33px;text-align:center;font-style:normal">1</i><i style="display:inline-block;width:4.33px;text-align:center;font-style:normal">0</i><i style="display:inline-block;width:4.33px;text-align:center;font-style:normal">0</i><i style="display:inline-block;width:4.33px;text-align:center;font-style:normal">.</i><i style="display:inline-block;width:4.33px;text-align:center;font-style:normal">2</i><i style="display:inline-block;width:4.33px;text-align:center;font-style:normal">7</i></div>
<div class="dot" style="left:482.4px;top:345.5px"></div>
<div class="lbl" style="left:483.9px;top:347.1px"><i style="display:inline-block;width:4.33px;text-align:center;font-style:normal">1</i><i style="display:inline-block;width:4.33px;text-align:center;font-style:normal">0</i><i style="display:inline-block;width:4.33px;text-align:center;font-style:normal">0</i><i style="display:inline-block;width:4.33px;text-align:center;font-style:normal">.</i><i style="display:inline-block;width:4.33px;text-align:center;font-style:normal">2</i><i style="display:inline-block;width:4.33px;text-align:center;font-style:normal">7</i></div>
<div class="dot" style="left:251.6px;top:407.3px"></div>
<div class="lbl" style="left:253.1px;top:408.9px"><i style="display:inline-block;width:4.33px;text-align:center;font-style:normal">1</i><i style="display:inline-block;width:4.33px;text-align:center;font-style:normal">0</i><i style="display:inline-block;width:4.33px;text-align:center;font-style:normal">0</i><i style="display:inline-block;width:4.33px;text-align:center;font-style:normal">.</i><i style="display:inline-block;width:4.33px;text-align:center;font-style:normal">2</i><i style="display:inline-block;width:4.33px;text-align:center;font-style:normal">8</i></div>
<div class="dot" style="left:420.6px;top:407.3px"></div>
<div class="lbl" style="left:422.1px;top:408.9px"><i style="display:inline-block;width:4.33px;text-align:center;font-style:normal">1</i><i style="display:inline-block;width:4.33px;text-align:center;font-style:normal">0</i><i style="display:inline-block;width:4.33px;text-align:center;font-style:normal">0</i><i style="display:inline-block;width:4.33px;text-align:center;font-style:normal">.</i><i style="display:inline-block;width:4.33px;text-align:center;font-style:normal">2</i><i style="display:inline-block;width:4.33px;text-align:center;font-style:normal">7</i></div>
<div class="dot" style="left:336.1px;top:419.9px"></div>
<div class="lbl" style="left:337.6px;top:421.5px"><i style="display:inline-block;width:4.33px;text-align:center;font-style:normal">1</i><i style="display:inline-block;width:4.33px;text-align:center;font-style:normal">0</i><i style="display:inline-block;width:4.33px;text-align:center;font-style:normal">0</i><i style="display:inline-block;width:4.33px;text-align:center;font-style:normal">.</i><i style="display:inline-block;width:4.33px;text-align:center;font-style:normal">2</i><i style="display:inline-block;width:4.33px;text-align:center;font-style:normal">8</i></div>
<svg class="abs" style="left:604px;top:45px" width="20" height="437">
<defs><linearGradient id="cbg" x1="0" y1="0" x2="0" y2="1"><stop offset="0.000" stop-color="#e01c1c"/><stop offset="0.050" stop-color="#d33023"/><stop offset="0.100" stop-color="#c64329"/><stop offset="0.150" stop-color="#b95730"/><stop offset="0.200" stop-color="#ac6a36"/><stop offset="0.250" stop-color="#9f7e3d"/><stop offset="0.300" stop-color="#929244"/><stop offset="0.350" stop-color="#85a54a"/><stop offset="0.400" stop-color="#78b951"/><stop offset="0.450" stop-color="#6bcc57"/><stop offset="0.500" stop-color="#5ee05e"/><stop offset="0.550" stop-color="#5cd06b"/><stop offset="0.600" stop-color="#5abf78"/><stop offset="0.650" stop-color="#57af85"/><stop offset="0.700" stop-color="#559e92"/><stop offset="0.750" stop-color="#538e9f"/><stop offset="0.800" stop-color="#517eac"/><stop offset="0.850" stop-color="#4f6db9"/><stop offset="0.900" stop-color="#4c5dc6"/><stop offset="0.950" stop-color="#4a4cd3"/><stop offset="1.000" stop-color="#483ce0"/></linearGradient></defs>
<rect x="0.5" y="0.5" width="14" height="436" fill="url(#cbg)" stroke="#111" stroke-width="1"/>
<path d="M12 0.5H15" stroke="#111" stroke-width="1"/><path d="M12 21.5H15" stroke="#111" stroke-width="1"/><path d="M12 43.5H15" stroke="#111" stroke-width="1"/><path d="M12 65.5H15" stroke="#111" stroke-width="1"/><path d="M12 87.5H15" stroke="#111" stroke-width="1"/><path d="M11 109.5H15" stroke="#111" stroke-width="1.2"/><path d="M12 130.5H15" stroke="#111" stroke-width="1"/><path d="M12 152.5H15" stroke="#111" stroke-width="1"/><path d="M12 174.5H15" stroke="#111" stroke-width="1"/><path d="M12 196.5H15" stroke="#111" stroke-width="1"/><path d="M11 218.5H15" stroke="#111" stroke-width="1.2"/><path d="M12 239.5H15" stroke="#111" stroke-width="1"/><path d="M12 261.5H15" stroke="#111" stroke-width="1"/><path d="M12 283.5H15" stroke="#111" stroke-width="1"/><path d="M12 305.5H15" stroke="#111" stroke-width="1"/><path d="M11 327.5H15" stroke="#111" stroke-width="1.2"/><path d="M12 348.5H15" stroke="#111" stroke-width="1"/><path d="M12 370.5H15" stroke="#111" stroke-width="1"/><path d="M12 392.5H15" stroke="#111" stroke-width="1"/><path d="M12 414.5H15" stroke="#111" stroke-width="1"/></svg>
<div class="abs" style="left:623px;top:148.9px;font-size:9px;color:#2a2a2a">100.435</div>
<div class="abs" style="left:623px;top:257.9px;font-size:9px;color:#2a2a2a">99.6125</div>
<div class="abs" style="left:623px;top:366.9px;font-size:9px;color:#2a2a2a">98.7896</div>
<div class="abs" style="left:659px;top:41px;width:482px;height:400px;background:#e9f5fd;border:1px solid #c6def2"></div>
<div class="abs" style="left:660px;top:42px;width:469px;height:22px;background:linear-gradient(#eef7fe,#d9ebfb)"></div>
<div class="abs" style="left:660px;top:48px;width:43.3px;text-align:center;font-size:9px;font-weight:bold;color:#2f4a70">Index</div>
<div class="abs" style="left:703.3px;top:48px;width:72.2px;text-align:center;font-size:9px;color:#6b7f99">X</div>
<div class="abs" style="left:775.5px;top:48px;width:71.9px;text-align:center;font-size:9px;color:#6b7f99">Y</div>
<div class="abs" style="left:847.4px;top:48px;width:72.1px;text-align:center;font-size:9px;color:#6b7f99">Intensity</div>
<div class="abs" style="left:919.5px;top:48px;width:71.9px;text-align:center;font-size:9px;color:#6b7f99">GOF</div>
<div class="abs" style="left:991.4px;top:48px;width:72.0px;text-align:center;font-size:9px;color:#6b7f99">Thickness1</div>
<div class="abs" style="left:702.8px;top:42px;width:1px;height:398px;background:#c6def2"></div>
<div class="abs" style="left:775.0px;top:42px;width:1px;height:398px;background:#c6def2"></div>
<div class="abs" style="left:846.9px;top:42px;width:1px;height:398px;background:#c6def2"></div>
<div class="abs" style="left:919.0px;top:42px;width:1px;height:398px;background:#c6def2"></div>
<div class="abs" style="left:990.9px;top:42px;width:1px;height:398px;background:#c6def2"></div>
<div class="abs" style="left:1062.9px;top:42px;width:1px;height:398px;background:#c6def2"></div>
<div class="abs" style="left:660px;top:64px;width:404px;height:1px;background:#c6def2"></div>
<div class="abs" style="left:660px;top:71.0px;width:404px;height:1px;background:#c6def2"></div>
<div class="abs" style="left:660px;top:92.7px;width:404px;height:1px;background:#c9dff3"></div>
<div class="cell" style="left:662.5px;top:76.7px;color:#222">5</div>
<div class="cell" style="left:705.8px;top:76.7px;color:#222">-15.56</div>
<div class="cell" style="left:778.0px;top:76.7px;color:#222">15.56</div>
<div class="cell" style="left:849.9px;top:76.7px;color:#222">15376.6</div>
<div class="cell" style="left:922.0px;top:76.7px;color:#222">0.999952</div>
<div class="cell" style="left:993.9px;top:76.7px;color:#222">100.277</div>
<div class="abs" style="left:660px;top:114.4px;width:404px;height:1px;background:#c9dff3"></div>
<div class="cell" style="left:662.5px;top:98.4px;color:#222">6</div>
<div class="cell" style="left:705.8px;top:98.4px;color:#222">-22</div>
<div class="cell" style="left:778.0px;top:98.4px;color:#222">0</div>
<div class="cell" style="left:849.9px;top:98.4px;color:#222">15371.8</div>
<div class="cell" style="left:922.0px;top:98.4px;color:#222">0.999954</div>
<div class="cell" style="left:993.9px;top:98.4px;color:#222">100.281</div>
<div class="abs" style="left:660px;top:136.1px;width:404px;height:1px;background:#c9dff3"></div>
<div class="cell" style="left:662.5px;top:120.1px;color:#222">7</div>
<div class="cell" style="left:705.8px;top:120.1px;color:#222">-15.56</div>
<div class="cell" style="left:778.0px;top:120.1px;color:#222">-15.56</div>
<div class="cell" style="left:849.9px;top:120.1px;color:#222">15371.5</div>
<div class="cell" style="left:922.0px;top:120.1px;color:#222">0.999954</div>
<div class="cell" style="left:993.9px;top:120.1px;color:#222">100.274</div>
<div class="abs" style="left:660px;top:157.8px;width:404px;height:1px;background:#c9dff3"></div>
<div class="cell" style="left:662.5px;top:141.8px;color:#222">8</div>
<div class="cell" style="left:705.8px;top:141.8px;color:#222">0</div>
<div class="cell" style="left:778.0px;top:141.8px;color:#222">-22</div>
<div class="cell" style="left:849.9px;top:141.8px;color:#222">15370.4</div>
<div class="cell" style="left:922.0px;top:141.8px;color:#222">0.999954</div>
<div class="cell" style="left:993.9px;top:141.8px;color:#222">100.274</div>
<div class="abs" style="left:660px;top:179.5px;width:404px;height:1px;background:#c9dff3"></div>
<div class="cell" style="left:662.5px;top:163.5px;color:#222">9</div>
<div class="cell" style="left:705.8px;top:163.5px;color:#222">15.56</div>
<div class="cell" style="left:778.0px;top:163.5px;color:#222">-15.56</div>
<div class="cell" style="left:849.9px;top:163.5px;color:#222">15373.7</div>
<div class="cell" style="left:922.0px;top:163.5px;color:#222">0.999952</div>
<div class="cell" style="left:993.9px;top:163.5px;color:#222">100.279</div>
<div class="abs" style="left:660px;top:201.2px;width:404px;height:1px;background:#c9dff3"></div>
<div class="cell" style="left:662.5px;top:185.2px;color:#222">10</div>
<div class="cell" style="left:705.8px;top:185.2px;color:#222">44</div>
<div class="cell" style="left:778.0px;top:185.2px;color:#222">0</div>
<div class="cell" style="left:849.9px;top:185.2px;color:#222">15370.3</div>
<div class="cell" style="left:922.0px;top:185.2px;color:#222">0.999953</div>
<div class="cell" style="left:993.9px;top:185.2px;color:#222">100.276</div>
<div class="abs" style="left:660px;top:222.9px;width:404px;height:1px;background:#c9dff3"></div>
<div class="cell" style="left:662.5px;top:206.9px;color:#222">11</div>
<div class="cell" style="left:705.8px;top:206.9px;color:#222">38.11</div>
<div class="cell" style="left:778.0px;top:206.9px;color:#222">22</div>
<div class="cell" style="left:849.9px;top:206.9px;color:#222">15369</div>
<div class="cell" style="left:922.0px;top:206.9px;color:#222">0.999952</div>
<div class="cell" style="left:993.9px;top:206.9px;color:#222">100.27</div>
<div class="abs" style="left:660px;top:244.6px;width:404px;height:1px;background:#c9dff3"></div>
<div class="cell" style="left:662.5px;top:228.6px;color:#222">12</div>
<div class="cell" style="left:705.8px;top:228.6px;color:#222">22</div>
<div class="cell" style="left:778.0px;top:228.6px;color:#222">38.11</div>
<div class="cell" style="left:849.9px;top:228.6px;color:#222">15373.7</div>
<div class="cell" style="left:922.0px;top:228.6px;color:#222">0.999953</div>
<div class="cell" style="left:993.9px;top:228.6px;color:#222">100.274</div>
<div class="abs" style="left:660px;top:266.3px;width:404px;height:1px;background:#c9dff3"></div>
<div class="cell" style="left:662.5px;top:250.3px;color:#222">13</div>
<div class="cell" style="left:705.8px;top:250.3px;color:#222">0</div>
<div class="cell" style="left:778.0px;top:250.3px;color:#222">44</div>
<div class="cell" style="left:849.9px;top:250.3px;color:#222">15370.1</div>
<div class="cell" style="left:922.0px;top:250.3px;color:#222">0.999952</div>
<div class="cell" style="left:993.9px;top:250.3px;color:#222">100.271</div>
<div class="abs" style="left:660px;top:288.0px;width:404px;height:1px;background:#c9dff3"></div>
<div class="cell" style="left:662.5px;top:272.0px;color:#222">14</div>
<div class="cell" style="left:705.8px;top:272.0px;color:#222">-22</div>
<div class="cell" style="left:778.0px;top:272.0px;color:#222">38.11</div>
<div class="cell" style="left:849.9px;top:272.0px;color:#222">15373.2</div>
<div class="cell" style="left:922.0px;top:272.0px;color:#222">0.999956</div>
<div class="cell" style="left:993.9px;top:272.0px;color:#222">100.267</div>
<div class="abs" style="left:660px;top:309.7px;width:404px;height:1px;background:#c9dff3"></div>
<div class="cell" style="left:662.5px;top:293.7px;color:#222">15</div>
<div class="cell" style="left:705.8px;top:293.7px;color:#222">-38.11</div>
<div class="cell" style="left:778.0px;top:293.7px;color:#222">22</div>
<div class="cell" style="left:849.9px;top:293.7px;color:#222">15369.2</div>
<div class="cell" style="left:922.0px;top:293.7px;color:#222">0.999956</div>
<div class="cell" style="left:993.9px;top:293.7px;color:#222">100.279</div>
<div class="abs" style="left:660px;top:331.4px;width:404px;height:1px;background:#c9dff3"></div>
<div class="cell" style="left:662.5px;top:315.4px;color:#222">16</div>
<div class="cell" style="left:705.8px;top:315.4px;color:#222">-44</div>
<div class="cell" style="left:778.0px;top:315.4px;color:#222">0</div>
<div class="cell" style="left:849.9px;top:315.4px;color:#222">15374.5</div>
<div class="cell" style="left:922.0px;top:315.4px;color:#222">0.999952</div>
<div class="cell" style="left:993.9px;top:315.4px;color:#222">100.271</div>
<div class="abs" style="left:660px;top:353.1px;width:404px;height:1px;background:#c9dff3"></div>
<div class="cell" style="left:662.5px;top:337.1px;color:#222">17</div>
<div class="cell" style="left:705.8px;top:337.1px;color:#222">-38.11</div>
<div class="cell" style="left:778.0px;top:337.1px;color:#222">-22</div>
<div class="cell" style="left:849.9px;top:337.1px;color:#222">15366</div>
<div class="cell" style="left:922.0px;top:337.1px;color:#222">0.999954</div>
<div class="cell" style="left:993.9px;top:337.1px;color:#222">100.267</div>
<div class="abs" style="left:660px;top:374.8px;width:404px;height:1px;background:#c9dff3"></div>
<div class="cell" style="left:662.5px;top:358.8px;color:#222">18</div>
<div class="cell" style="left:705.8px;top:358.8px;color:#222">-22</div>
<div class="cell" style="left:778.0px;top:358.8px;color:#222">-38.11</div>
<div class="cell" style="left:849.9px;top:358.8px;color:#222">15377.4</div>
<div class="cell" style="left:922.0px;top:358.8px;color:#222">0.999953</div>
<div class="cell" style="left:993.9px;top:358.8px;color:#222">100.284</div>
<div class="abs" style="left:660px;top:396.5px;width:404px;height:1px;background:#c9dff3"></div>
<div class="cell" style="left:662.5px;top:380.5px;color:#222">19</div>
<div class="cell" style="left:705.8px;top:380.5px;color:#222">0</div>
<div class="cell" style="left:778.0px;top:380.5px;color:#222">-41.37</div>
<div class="cell" style="left:849.9px;top:380.5px;color:#222">15369.8</div>
<div class="cell" style="left:922.0px;top:380.5px;color:#222">0.999955</div>
<div class="cell" style="left:993.9px;top:380.5px;color:#222">100.277</div>
<div class="abs" style="left:660px;top:418.2px;width:404px;height:1px;background:#c9dff3"></div>
<div class="cell" style="left:662.5px;top:402.2px;color:#222">20</div>
<div class="cell" style="left:705.8px;top:402.2px;color:#222">22</div>
<div class="cell" style="left:778.0px;top:402.2px;color:#222">-38.11</div>
<div class="cell" style="left:849.9px;top:402.2px;color:#222">15367.9</div>
<div class="cell" style="left:922.0px;top:402.2px;color:#222">0.999955</div>
<div class="cell" style="left:993.9px;top:402.2px;color:#222">100.266</div>
<div class="abs" style="left:660px;top:419.2px;width:43px;height:20.7px;background:linear-gradient(#d7e8f8,#bcd6ef)"></div>
<div class="abs" style="left:660px;top:439.9px;width:404px;height:1px;background:#c9dff3"></div>
<div class="cell" style="left:662.5px;top:423.9px;color:#4a6a9a">21</div>
<div class="cell" style="left:705.8px;top:423.9px;color:#222">38.11</div>
<div class="cell" style="left:778.0px;top:423.9px;color:#222">-22</div>
<div class="cell" style="left:849.9px;top:423.9px;color:#222">15366.9</div>
<div class="cell" style="left:922.0px;top:423.9px;color:#222">0.999952</div>
<div class="cell" style="left:993.9px;top:423.9px;color:#222">100.271</div>
<div class="abs" style="left:1129px;top:42px;width:12px;height:398px;background:#f3f8fc"></div><div class="abs" style="left:1129px;top:42px;width:12px;height:12px;background:#eef6fd;border-right:1.5px solid #7d7d7d;border-bottom:1.5px solid #7d7d7d"></div><svg class="abs" style="left:1132px;top:46px" width="6" height="4"><path d="M0 3.5H6L3 0.5Z" fill="#111"/></svg><div class="abs" style="left:1129px;top:126px;width:12px;height:302px;background:#eaf5fd;border-right:1.5px solid #7d7d7d;border-bottom:1.5px solid #7d7d7d"></div><div class="abs" style="left:1129px;top:428px;width:12px;height:12px;background:#eef6fd;border-right:1.5px solid #7d7d7d;border-bottom:1.5px solid #7d7d7d"></div><svg class="abs" style="left:1132px;top:432px" width="6" height="4"><path d="M0 0.5H6L3 3.5Z" fill="#111"/></svg>
<div class="abs" style="left:659px;top:445px;width:482px;height:41px;border:1px solid #cde2f4;background:#e9f5fd"></div>
<div class="abs" style="left:662px;top:452.3px;width:10px;height:10px;border-radius:50%;border:1px solid #cfe0ef;background:#eef6fd"></div>
<div class="abs" style="left:677px;top:451px;font-size:8.5px;color:#222">路径</div>
<div class="abs" style="left:702.2px;top:452.3px;width:10px;height:10px;border-radius:50%;border:1px solid #cfe0ef;background:#eef6fd"></div>
<div class="abs" style="left:704.7px;top:454.8px;width:5px;height:5px;border-radius:50%;background:#3a6890"></div>
<div class="abs" style="left:717.3px;top:451.5px;font-size:9px;color:#222">2D</div>
<div class="abs" style="left:742.8px;top:452.3px;width:10px;height:10px;border-radius:50%;border:1px solid #cfe0ef;background:#eef6fd"></div>
<div class="abs" style="left:757.7px;top:451.5px;font-size:9px;color:#222">3D</div>
<div class="abs" style="left:783px;top:447.5px;width:70px;height:18px;border:1px solid #b9d8f4;border-radius:3px;background:#eaf5fd"></div>
<div class="abs" style="left:785px;top:452.5px;font-size:9px;color:#222">Thickness1</div>
<svg class="abs" style="left:839px;top:455px" width="8" height="5"><path d="M0 0H8L4 4Z" fill="#a0a6b2"/></svg>
<div class="abs" style="left:662px;top:472px;width:11px;height:11px;border:1px solid #d6e6f4;background:#eef6fd"></div>
<svg class="abs" style="left:663px;top:473px" width="10" height="10"><path d="M1 5L4 8L9.5 2" stroke="#2f5f8f" stroke-width="2" fill="none"/></svg>
<div class="abs" style="left:677px;top:471.5px;font-size:8.5px;color:#222">点位</div>
<div class="abs" style="left:702.2px;top:472px;width:11px;height:11px;border:1px solid #d6e6f4;background:#eef6fd"></div>
<svg class="abs" style="left:703.2px;top:473px" width="10" height="10"><path d="M1 5L4 8L9.5 2" stroke="#2f5f8f" stroke-width="2" fill="none"/></svg>
<div class="abs" style="left:717px;top:471.5px;font-size:8.5px;color:#222">值</div>
<div class="abs" style="left:742.3px;top:472px;width:11px;height:11px;border:1px solid #d6e6f4;background:#eef6fd"></div>
<svg class="abs" style="left:743.3px;top:473px" width="10" height="10"><path d="M1 5L4 8L9.5 2" stroke="#2f5f8f" stroke-width="2" fill="none"/></svg>
<div class="abs" style="left:757px;top:471.5px;font-size:8.5px;color:#222">颜色</div>
<div class="abs" style="left:865.6px;top:452px;font-size:9px;color:#222">最小值:</div>
<div class="abs" style="left:898.2px;top:452px;font-size:9px;color:#222;text-decoration:underline">100.2620</div>
<div class="abs" style="left:956.5px;top:452px;font-size:9px;color:#222">均值:</div>
<div class="abs" style="left:980px;top:452px;font-size:9px;color:#222;text-decoration:underline">100.2750</div>
<div class="abs" style="left:1038.6px;top:452px;font-size:9px;color:#222">范围:</div>
<div class="abs" style="left:1062.5px;top:452px;font-size:9px;color:#222;text-decoration:underline">0.0330</div>
<div class="abs" style="left:865.6px;top:472px;font-size:9px;color:#222">最大值:</div>
<div class="abs" style="left:898.2px;top:472px;font-size:9px;color:#222;text-decoration:underline">100.2950</div>
<div class="abs" style="left:956.5px;top:472px;font-size:9px;color:#222">方差:</div>
<div class="abs" style="left:980px;top:472px;font-size:9px;color:#222;text-decoration:underline">0.0073</div>
<div class="abs" style="left:1030.3px;top:472px;font-size:9px;color:#222">均匀度:</div>
<div class="abs" style="left:1062.5px;top:472px;font-size:9px;color:#222;text-decoration:underline">0.0002</div>
<div class="abs" style="left:1145px;top:41px;width:233px;height:444px;border:1px solid #d3e6f6;border-radius:2px;background:#e9f5fd"></div>
<div class="abs" style="left:1363px;top:44px;width:12px;height:439px;background:#f3f8fc"></div><div class="abs" style="left:1363px;top:44px;width:12px;height:12px;background:#eef6fd;border-right:1.5px solid #7d7d7d;border-bottom:1.5px solid #7d7d7d"></div><svg class="abs" style="left:1366px;top:48px" width="6" height="4"><path d="M0 3.5H6L3 0.5Z" fill="#111"/></svg><div class="abs" style="left:1363px;top:105px;width:12px;height:365px;background:#eaf5fd;border-right:1.5px solid #7d7d7d;border-bottom:1.5px solid #7d7d7d"></div><div class="abs" style="left:1363px;top:471px;width:12px;height:12px;background:#eef6fd;border-right:1.5px solid #7d7d7d;border-bottom:1.5px solid #7d7d7d"></div><svg class="abs" style="left:1366px;top:475px" width="6" height="4"><path d="M0 0.5H6L3 3.5Z" fill="#111"/></svg>
<div class="log" style="top:56.4px">16/21, Loc: (-44, 0)<br>Index: 16/21, Circle: 1/1<br>GOF = <span class="red">0.999952</span><br>layer_1_thickness = <span class="red">100.2705 nm</span></div>
<div class="log" style="top:125.0px">17/21, Loc: (-38.11, -22)<br>Index: 17/21, Circle: 1/1<br>GOF = <span class="red">0.999954</span><br>layer_1_thickness = <span class="red">100.2672 nm</span></div>
<div class="log" style="top:193.5px">18/21, Loc: (-22, -38.11)<br>Index: 18/21, Circle: 1/1<br>GOF = <span class="red">0.999953</span><br>layer_1_thickness = <span class="red">100.2842 nm</span></div>
<div class="log" style="top:261.9px">19/21, Loc: (0, -41.37)<br>Index: 19/21, Circle: 1/1<br>GOF = <span class="red">0.999955</span><br>layer_1_thickness = <span class="red">100.2770 nm</span></div>
<div class="log" style="top:330.4px">20/21, Loc: (22, -38.11)<br>Index: 20/21, Circle: 1/1<br>GOF = <span class="red">0.999955</span><br>layer_1_thickness = <span class="red">100.2658 nm</span></div>
<div class="log" style="top:398.9px">21/21, Loc: (38.11, -22)<br>Index: 21/21, Circle: 1/1<br>GOF = <span class="red">0.999952</span><br>layer_1_thickness = <span class="red">100.2706 nm</span></div>
<div class="log" style="top:467.4px">mapping over</div>
<div class="btn" style="left:5px;top:492.5px;width:40px;height:19.5px;line-height:17px;font-size:10px">Istd</div>
<div class="btn" style="left:50px;top:492.5px;width:40px;height:19.5px;line-height:17px;font-size:10px">Rstd</div>
<div class="btn" style="left:94.5px;top:492.5px;width:40px;height:19.5px;line-height:17px;font-size:10px">I</div>
<div class="btn" style="left:139px;top:492.5px;width:40px;height:19.5px;line-height:17px;font-size:10px">R</div>
<div class="btn" style="left:184px;top:492.5px;width:40px;height:19.5px;line-height:17px;font-size:10px">FFT</div>
<div class="abs" style="left:243px;top:497.5px;font-size:9.1px;color:#222;white-space:nowrap">Wavelength(nm):574.4341</div>
<div class="abs" style="left:355.8px;top:497.5px;font-size:9.1px;color:#222;white-space:nowrap">Refl:0.090813</div>
<div class="abs" style="left:417.2px;top:497.5px;font-size:9.1px;color:#222;white-space:nowrap">Model:0.0920028</div>
<div class="btn" style="left:1266px;top:492.5px;width:52px;height:19.5px;line-height:17px;font-size:9px">打开数据</div>
<div class="btn" style="left:1322.5px;top:492.5px;width:52px;height:19.5px;line-height:17px;font-size:9.5px">仿真</div>
<div class="abs" style="left:1px;top:513px;width:1380px;height:241px;background:#daecfd"></div>
<svg class="abs" style="left:0;top:0" width="1381" height="756"><path d="M60 523.5H1371.0" stroke="#9ba5b0" stroke-width="1" stroke-dasharray="1 1"/><path d="M60 574.5H1371.0" stroke="#9ba5b0" stroke-width="1" stroke-dasharray="1 1"/><path d="M60 626.5H1371.0" stroke="#9ba5b0" stroke-width="1" stroke-dasharray="1 1"/><path d="M60 677.5H1371.0" stroke="#9ba5b0" stroke-width="1" stroke-dasharray="1 1"/><path d="M383.5 524V727.4" stroke="#a0aab4" stroke-width="1" stroke-dasharray="1 1"/><path d="M712.5 524V727.4" stroke="#a0aab4" stroke-width="1" stroke-dasharray="1 1"/><path d="M1041.5 524V727.4" stroke="#a0aab4" stroke-width="1" stroke-dasharray="1 1"/><path d="M1371.5 524V727.4" stroke="#a0aab4" stroke-width="1" stroke-dasharray="1 1"/><path d="M433.9 523.4V727.4" stroke="#e8404a" stroke-width="1" stroke-dasharray="3 2"/><path d="M54.6 524.32 L57.6 528.70 L60.6 532.16 L63.6 535.13 L66.6 538.04 L69.6 541.06 L72.6 544.14 L75.6 547.22 L78.6 550.25 L81.6 553.19 L84.6 556.00 L87.6 558.68 L90.6 561.41 L93.6 564.41 L96.6 567.70 L99.6 571.00 L102.6 574.03 L105.6 576.80 L108.6 579.35 L111.6 581.75 L114.6 584.07 L117.6 586.37 L120.6 588.72 L123.6 591.13 L126.6 593.60 L129.6 596.11 L132.6 598.67 L135.6 601.24 L138.6 603.83 L141.6 606.41 L144.6 608.99 L147.6 611.54 L150.6 614.05 L153.6 616.52 L156.6 618.93 L159.6 621.27 L162.6 623.55 L165.6 625.77 L168.6 627.93 L171.6 630.04 L174.6 632.09 L177.6 634.10 L180.6 636.05 L183.6 637.96 L186.6 639.83 L189.6 641.66 L192.6 643.45 L195.6 645.21 L198.6 646.94 L201.6 648.63 L204.6 650.30 L207.6 651.94 L210.6 653.56 L213.6 655.17 L216.6 656.75 L219.6 658.31 L222.6 659.85 L225.6 661.37 L228.6 662.88 L231.6 664.36 L234.6 665.82 L237.6 667.26 L240.6 668.69 L243.6 670.09 L246.6 671.47 L249.6 672.84 L252.6 674.18 L255.6 675.50 L258.6 676.80 L261.6 678.09 L264.6 679.35 L267.6 680.59 L270.6 681.81 L273.6 683.02 L276.6 684.20 L279.6 685.36 L282.6 686.50 L285.6 687.63 L288.6 688.73 L291.6 689.81 L294.6 690.87 L297.6 691.91 L300.6 692.93 L303.6 693.93 L306.6 694.91 L309.6 695.87 L312.6 696.81 L315.6 697.74 L318.6 698.64 L321.6 699.52 L324.6 700.39 L327.6 701.23 L330.6 702.06 L333.6 702.87 L336.6 703.67 L339.6 704.44 L342.6 705.20 L345.6 705.94 L348.6 706.66 L351.6 707.37 L354.6 708.06 L357.6 708.73 L360.6 709.38 L363.6 710.02 L366.6 710.65 L369.6 711.26 L372.6 711.85 L375.6 712.43 L378.6 712.99 L381.6 713.53 L384.6 714.07 L387.6 714.58 L390.6 715.09 L393.6 715.57 L396.6 716.05 L399.6 716.51 L402.6 716.96 L405.6 717.39 L408.6 717.81 L411.6 718.21 L414.6 718.61 L417.6 718.99 L420.6 719.36 L423.6 719.71 L426.6 720.06 L429.6 720.39 L432.6 720.71 L435.6 721.00 L438.6 721.29 L441.6 721.56 L444.6 721.82 L447.6 722.06 L450.6 722.30 L453.6 722.53 L456.6 722.75 L459.6 722.95 L462.6 723.15 L465.6 723.34 L468.6 723.52 L471.6 723.69 L474.6 723.85 L477.6 724.00 L480.6 724.14 L483.6 724.27 L486.6 724.40 L489.6 724.51 L492.6 724.62 L495.6 724.72 L498.6 724.81 L501.6 724.90 L504.6 724.97 L507.6 725.04 L510.6 725.10 L513.6 725.16 L516.6 725.20 L519.6 725.24 L522.6 725.27 L525.6 725.30 L528.6 725.32 L531.6 725.33 L534.6 725.33 L537.6 725.33 L540.6 725.32 L543.6 725.30 L546.6 725.28 L549.6 725.25 L552.6 725.21 L555.6 725.17 L558.6 725.12 L561.6 725.07 L564.6 725.01 L567.6 724.94 L570.6 724.87 L573.6 724.79 L576.6 724.71 L579.6 724.62 L582.6 724.53 L585.6 724.44 L588.6 724.34 L591.6 724.24 L594.6 724.13 L597.6 724.02 L600.6 723.90 L603.6 723.78 L606.6 723.66 L609.6 723.53 L612.6 723.39 L615.6 723.25 L618.6 723.11 L621.6 722.96 L624.6 722.81 L627.6 722.65 L630.6 722.49 L633.6 722.33 L636.6 722.16 L639.6 721.99 L642.6 721.82 L645.6 721.64 L648.6 721.46 L651.6 721.27 L654.6 721.09 L657.6 720.90 L660.6 720.70 L663.6 720.50 L666.6 720.30 L669.6 720.10 L672.6 719.90 L675.6 719.69 L678.6 719.48 L681.6 719.27 L684.6 719.05 L687.6 718.84 L690.6 718.62 L693.6 718.40 L696.6 718.17 L699.6 717.95 L702.6 717.72 L705.6 717.49 L708.6 717.26 L711.6 717.03 L714.6 716.77 L717.6 716.51 L720.6 716.24 L723.6 715.97 L726.6 715.70 L729.6 715.42 L732.6 715.15 L735.6 714.88 L738.6 714.60 L741.6 714.32 L744.6 714.04 L747.6 713.76 L750.6 713.47 L753.6 713.19 L756.6 712.90 L759.6 712.61 L762.6 712.32 L765.6 712.03 L768.6 711.74 L771.6 711.44 L774.6 711.15 L777.6 710.85 L780.6 710.55 L783.6 710.24 L786.6 709.94 L789.6 709.63 L792.6 709.32 L795.6 709.01 L798.6 708.70 L801.6 708.40 L804.6 708.11 L807.6 707.82 L810.6 707.53 L813.6 707.24 L816.6 706.94 L819.6 706.64 L822.6 706.34 L825.6 706.04 L828.6 705.73 L831.6 705.43 L834.6 705.12 L837.6 704.80 L840.6 704.49 L843.6 704.17 L846.6 703.85 L849.6 703.53 L852.6 703.20 L855.6 702.88 L858.6 702.55 L861.6 702.21 L864.6 701.88 L867.6 701.54 L870.6 701.20 L873.6 700.85 L876.6 700.51 L879.6 700.16 L882.6 699.80 L885.6 699.45 L888.6 699.09 L891.6 698.73 L894.6 698.37 L897.6 698.00 L900.6 697.63 L903.6 697.29 L906.6 696.95 L909.6 696.60 L912.6 696.25 L915.6 695.90 L918.6 695.55 L921.6 695.19 L924.6 694.83 L927.6 694.47 L930.6 694.11 L933.6 693.75 L936.6 693.39 L939.6 693.02 L942.6 692.66 L945.6 692.29 L948.6 691.92 L951.6 691.55 L954.6 691.19 L957.6 690.82 L960.6 690.45 L963.6 690.08 L966.6 689.71 L969.6 689.34 L972.6 688.98 L975.6 688.61 L978.6 688.24 L981.6 687.88 L984.6 687.51 L987.6 687.15 L990.6 686.79 L993.6 686.43 L996.6 686.07 L999.6 685.75 L1002.6 685.42 L1005.6 685.10 L1008.6 684.78 L1011.6 684.46 L1014.6 684.14 L1017.6 683.83 L1020.6 683.52 L1023.6 683.21 L1026.6 682.91 L1029.6 682.61 L1032.6 682.31 L1035.6 682.01 L1038.6 681.72 L1041.6 681.44 L1044.6 681.15 L1047.6 680.82 L1050.6 680.48 L1053.6 680.15 L1056.6 679.82 L1059.6 679.49 L1062.6 679.17 L1065.6 678.85 L1068.6 678.53 L1071.6 678.21 L1074.6 677.89 L1077.6 677.58 L1080.6 677.26 L1083.6 676.95 L1086.6 676.64 L1089.6 676.32 L1092.6 676.01 L1095.6 675.69 L1098.6 675.38 L1101.6 675.06 L1104.6 674.74 L1107.6 674.42 L1110.6 674.10 L1113.6 673.78 L1116.6 673.45 L1119.6 673.12 L1122.6 672.78 L1125.6 672.45 L1128.6 672.10 L1131.6 671.76 L1134.6 671.41 L1137.6 671.05 L1140.6 670.69 L1143.6 670.33 L1146.6 669.98 L1149.6 669.63 L1152.6 669.28 L1155.6 668.92 L1158.6 668.56 L1161.6 668.20 L1164.6 667.83 L1167.6 667.45 L1170.6 667.08 L1173.6 666.70 L1176.6 666.31 L1179.6 665.93 L1182.6 665.54 L1185.6 665.15 L1188.6 664.76 L1191.6 664.36 L1194.6 663.97 L1197.6 663.57 L1200.6 663.18 L1203.6 662.78 L1206.6 662.38 L1209.6 661.99 L1212.6 661.59 L1215.6 661.20 L1218.6 660.80 L1221.6 660.41 L1224.6 660.02 L1227.6 659.63 L1230.6 659.25 L1233.6 658.86 L1236.6 658.48 L1239.6 658.11 L1242.6 657.74 L1245.6 657.41 L1248.6 657.08 L1251.6 656.75 L1254.6 656.42 L1257.6 656.10 L1260.6 655.79 L1263.6 655.47 L1266.6 655.16 L1269.6 654.85 L1272.6 654.54 L1275.6 654.23 L1278.6 653.92 L1281.6 653.62 L1284.6 653.31 L1287.6 653.01 L1290.6 652.71 L1293.6 652.41 L1296.6 652.11 L1299.6 651.81 L1302.6 651.51 L1305.6 651.21 L1308.6 650.91 L1311.6 650.60 L1314.6 650.30 L1317.6 650.00 L1320.6 649.69 L1323.6 649.39 L1326.6 649.08 L1329.6 648.77 L1332.6 648.46 L1335.6 648.15 L1338.6 647.83 L1341.6 647.51 L1344.6 647.15 L1347.6 646.79 L1350.6 646.43 L1353.6 646.06 L1356.6 645.69 L1359.6 645.31 L1362.6 644.94 L1365.6 644.55 L1368.6 644.17" stroke="#303030" stroke-width="1" fill="none" stroke-dasharray="3 2"/><path d="M54.6 526.52 L57.6 530.91 L60.6 534.03 L63.6 536.93 L66.6 539.79 L69.6 542.97 L72.6 546.00 L75.6 549.10 L78.6 552.10 L81.6 554.97 L84.6 557.86 L87.6 560.65 L90.6 563.65 L93.6 566.56 L96.6 569.73 L99.6 572.82 L102.6 575.71 L105.6 578.59 L108.6 581.08 L111.6 583.52 L114.6 585.72 L117.6 588.25 L120.6 590.71 L123.6 593.05 L126.6 595.31 L129.6 597.86 L132.6 600.48 L135.6 603.04 L138.6 605.55 L141.6 608.21 L144.6 611.02 L147.6 613.47 L150.6 615.86 L153.6 618.06 L156.6 620.36 L159.6 622.66 L162.6 624.91 L165.6 627.44 L168.6 629.67 L171.6 631.71 L174.6 633.71 L177.6 635.68 L180.6 637.62 L183.6 639.41 L186.6 641.25 L189.6 643.14 L192.6 644.98 L195.6 646.58 L198.6 648.35 L201.6 650.12 L204.6 652.06 L207.6 653.82 L210.6 655.44 L213.6 657.09 L216.6 658.46 L219.6 659.99 L222.6 661.22 L225.6 662.78 L228.6 664.02 L231.6 665.76 L234.6 667.38 L237.6 668.97 L240.6 670.45 L243.6 671.66 L246.6 673.06 L249.6 674.27 L252.6 675.57 L255.6 676.91 L258.6 678.36 L261.6 679.64 L264.6 680.93 L267.6 681.98 L270.6 683.44 L273.6 684.59 L276.6 685.84 L279.6 686.89 L282.6 688.00 L285.6 688.93 L288.6 690.09 L291.6 691.01 L294.6 692.21 L297.6 693.17 L300.6 694.23 L303.6 695.21 L306.6 696.24 L309.6 697.26 L312.6 698.10 L315.6 698.64 L318.6 699.45 L321.6 700.35 L324.6 701.43 L327.6 702.27 L330.6 703.17 L333.6 703.97 L336.6 704.83 L339.6 705.62 L342.6 706.34 L345.6 707.06 L348.6 707.91 L351.6 708.76 L354.6 709.35 L357.6 709.81 L360.6 710.43 L363.6 711.29 L366.6 711.92 L369.6 712.42 L372.6 712.83 L375.6 713.44 L378.6 714.07 L381.6 714.63 L384.6 715.08 L387.6 715.52 L390.6 716.12 L393.6 716.56 L396.6 717.10 L399.6 717.57 L402.6 718.11 L405.6 718.42 L408.6 718.87 L411.6 719.16 L414.6 719.66 L417.6 719.85 L420.6 720.11 L423.6 720.44 L426.6 720.87 L429.6 721.34 L432.6 721.65 L435.6 721.87 L438.6 722.10 L441.6 722.33 L444.6 722.83 L447.6 723.22 L450.6 723.44 L453.6 723.55 L456.6 723.66 L459.6 723.87 L462.6 724.10 L465.6 724.29 L468.6 724.37 L471.6 724.38 L474.6 724.60 L477.6 724.92 L480.6 725.26 L483.6 725.33 L486.6 725.52 L489.6 725.57 L492.6 725.73 L495.6 725.85 L498.6 725.95 L501.6 725.98 L504.6 726.08 L507.6 726.00 L510.6 726.15 L513.6 726.12 L516.6 726.32 L519.6 726.29 L522.6 726.32 L525.6 726.30 L528.6 726.48 L531.6 726.43 L534.6 726.46 L537.6 726.35 L540.6 726.30 L543.6 726.52 L546.6 726.52 L549.6 726.48 L552.6 726.34 L555.6 726.21 L558.6 726.34 L561.6 726.24 L564.6 726.22 L567.6 726.09 L570.6 725.90 L573.6 725.88 L576.6 725.69 L579.6 725.55 L582.6 725.46 L585.6 725.60 L588.6 725.67 L591.6 725.74 L594.6 725.60 L597.6 725.38 L600.6 725.10 L603.6 724.73 L606.6 724.56 L609.6 724.34 L612.6 724.41 L615.6 724.42 L618.6 724.31 L621.6 724.09 L624.6 723.73 L627.6 723.62 L630.6 723.53 L633.6 723.54 L636.6 723.31 L639.6 723.30 L642.6 723.19 L645.6 723.07 L648.6 722.66 L651.6 722.34 L654.6 722.17 L657.6 722.02 L660.6 721.90 L663.6 721.75 L666.6 721.68 L669.6 721.53 L672.6 721.24 L675.6 720.95 L678.6 720.60 L681.6 720.34 L684.6 720.26 L687.6 720.03 L690.6 720.04 L693.6 719.62 L696.6 719.45 L699.6 719.15 L702.6 718.95 L705.6 718.73 L708.6 718.38 L711.6 718.10 L714.6 717.82 L717.6 717.55 L720.6 717.50 L723.6 717.26 L726.6 717.23 L729.6 716.60 L732.6 716.38 L735.6 716.03 L738.6 716.00 L741.6 715.85 L744.6 715.60 L747.6 715.35 L750.6 715.04 L753.6 714.98 L756.6 714.77 L759.6 714.50 L762.6 713.95 L765.6 713.68 L768.6 713.27 L771.6 713.03 L774.6 712.97 L777.6 712.92 L780.6 712.72 L783.6 712.33 L786.6 712.13 L789.6 711.85 L792.6 711.65 L795.6 711.30 L798.6 710.98 L801.6 710.66 L804.6 710.07 L807.6 709.71 L810.6 709.29 L813.6 709.13 L816.6 708.87 L819.6 708.49 L822.6 708.21 L825.6 708.17 L828.6 707.99 L831.6 707.75 L834.6 707.31 L837.6 706.91 L840.6 706.70 L843.6 706.28 L846.6 706.17 L849.6 705.59 L852.6 705.31 L855.6 704.81 L858.6 704.51 L861.6 704.22 L864.6 703.76 L867.6 703.77 L870.6 703.36 L873.6 703.22 L876.6 702.68 L879.6 702.38 L882.6 701.68 L885.6 701.33 L888.6 700.75 L891.6 700.69 L894.6 700.31 L897.6 700.12 L900.6 699.59 L903.6 699.50 L906.6 699.39 L909.6 699.12 L912.6 698.45 L915.6 697.75 L918.6 697.60 L921.6 697.54 L924.6 696.91 L927.6 696.20 L930.6 695.29 L933.6 694.91 L936.6 694.33 L939.6 694.18 L942.6 693.77 L945.6 693.94 L948.6 693.65 L951.6 693.28 L954.6 692.40 L957.6 691.70 L960.6 691.77 L963.6 691.40 L966.6 690.83 L969.6 690.13 L972.6 689.98 L975.6 689.75 L978.6 689.70 L981.6 689.28 L984.6 689.12 L987.6 688.20 L990.6 687.75 L993.6 687.22 L996.6 686.51 L999.6 686.19 L1002.6 685.43 L1005.6 685.55 L1008.6 684.76 L1011.6 685.26 L1014.6 684.97 L1017.6 685.15 L1020.6 684.52 L1023.6 683.76 L1026.6 682.62 L1029.6 681.95 L1032.6 682.13 L1035.6 682.37 L1038.6 682.30 L1041.6 681.97 L1044.6 681.22 L1047.6 680.75 L1050.6 680.68 L1053.6 680.60 L1056.6 679.65 L1059.6 678.73 L1062.6 678.43 L1065.6 678.77 L1068.6 678.27 L1071.6 678.10 L1074.6 677.05 L1077.6 677.22 L1080.6 677.33 L1083.6 678.03 L1086.6 677.03 L1089.6 676.35 L1092.6 674.78 L1095.6 674.99 L1098.6 674.55 L1101.6 674.83 L1104.6 674.53 L1107.6 674.27 L1110.6 674.53 L1113.6 674.14 L1116.6 673.84 L1119.6 672.64 L1122.6 671.92 L1125.6 671.37 L1128.6 671.70 L1131.6 671.70 L1134.6 671.94 L1137.6 671.24 L1140.6 670.81 L1143.6 670.07 L1146.6 669.89 L1149.6 669.73 L1152.6 669.10 L1155.6 669.21 L1158.6 668.57 L1161.6 668.68 L1164.6 667.85 L1167.6 667.99 L1170.6 666.82 L1173.6 666.58 L1176.6 665.59 L1179.6 665.66 L1182.6 665.44 L1185.6 664.81 L1188.6 663.92 L1191.6 662.84 L1194.6 662.83 L1197.6 662.24 L1200.6 662.14 L1203.6 661.25 L1206.6 661.05 L1209.6 660.48 L1212.6 660.55 L1215.6 660.28 L1218.6 659.82 L1221.6 659.27 L1224.6 658.96 L1227.6 657.88 L1230.6 657.35 L1233.6 657.04 L1236.6 657.77 L1239.6 658.10 L1242.6 657.87 L1245.6 657.16 L1248.6 655.86 L1251.6 655.30 L1254.6 655.12 L1257.6 655.40 L1260.6 654.72 L1263.6 654.18 L1266.6 653.66 L1269.6 654.11 L1272.6 653.74 L1275.6 652.95 L1278.6 651.82 L1281.6 651.26 L1284.6 650.86 L1287.6 650.94 L1290.6 651.00 L1293.6 651.05 L1296.6 650.79 L1299.6 649.97 L1302.6 649.50 L1305.6 648.66 L1308.6 648.44 L1311.6 648.32 L1314.6 648.06 L1317.6 647.12 L1320.6 646.30 L1323.6 645.73 L1326.6 645.46 L1329.6 644.92 L1332.6 645.05 L1335.6 645.62 L1338.6 645.33 L1341.6 644.96 L1344.6 644.42 L1347.6 643.83 L1350.6 643.12 L1353.6 642.36 L1356.6 642.36 L1359.6 641.49 L1362.6 640.99 L1365.6 640.84 L1368.6 640.90" stroke="#e3474f" stroke-width="0.9" fill="none"/><path d="M54.6 728.4V522.9" stroke="#4d7397" stroke-width="1.25"/><path d="M51.300000000000004 524.4 L54.6 517.4 L57.9 524.4 Z" fill="#3f6588"/><path d="M53.9 729H1372.0" stroke="#7596b5" stroke-width="2"/><path d="M1370.0 725.5 L1377.5 729 L1370.0 732.5 Z" fill="#3f6588"/><path d="M54.6 523.4H59.1" stroke="#4d7397" stroke-width="1"/><path d="M54.6 533.6H57.1" stroke="#4d7397" stroke-width="1"/><path d="M54.6 543.9H57.1" stroke="#4d7397" stroke-width="1"/><path d="M54.6 554.1H57.1" stroke="#4d7397" stroke-width="1"/><path d="M54.6 564.4H57.1" stroke="#4d7397" stroke-width="1"/><path d="M54.6 574.6H59.1" stroke="#4d7397" stroke-width="1"/><path d="M54.6 584.9H57.1" stroke="#4d7397" stroke-width="1"/><path d="M54.6 595.1H57.1" stroke="#4d7397" stroke-width="1"/><path d="M54.6 605.4H57.1" stroke="#4d7397" stroke-width="1"/><path d="M54.6 615.6H57.1" stroke="#4d7397" stroke-width="1"/><path d="M54.6 625.9H59.1" stroke="#4d7397" stroke-width="1"/><path d="M54.6 636.1H57.1" stroke="#4d7397" stroke-width="1"/><path d="M54.6 646.4H57.1" stroke="#4d7397" stroke-width="1"/><path d="M54.6 656.6H57.1" stroke="#4d7397" stroke-width="1"/><path d="M54.6 666.9H57.1" stroke="#4d7397" stroke-width="1"/><path d="M54.6 677.1H59.1" stroke="#4d7397" stroke-width="1"/><path d="M54.6 687.4H57.1" stroke="#4d7397" stroke-width="1"/><path d="M54.6 697.6H57.1" stroke="#4d7397" stroke-width="1"/><path d="M54.6 707.9H57.1" stroke="#4d7397" stroke-width="1"/><path d="M54.6 718.1H57.1" stroke="#4d7397" stroke-width="1"/><path d="M120.4 728.4V725.9" stroke="#4d7397" stroke-width="1"/><path d="M186.2 728.4V725.9" stroke="#4d7397" stroke-width="1"/><path d="M252.1 728.4V725.9" stroke="#4d7397" stroke-width="1"/><path d="M317.9 728.4V725.9" stroke="#4d7397" stroke-width="1"/><path d="M383.7 728.4V723.9" stroke="#4d7397" stroke-width="1"/><path d="M449.5 728.4V725.9" stroke="#4d7397" stroke-width="1"/><path d="M515.3 728.4V725.9" stroke="#4d7397" stroke-width="1"/><path d="M581.2 728.4V725.9" stroke="#4d7397" stroke-width="1"/><path d="M647.0 728.4V725.9" stroke="#4d7397" stroke-width="1"/><path d="M712.8 728.4V723.9" stroke="#4d7397" stroke-width="1"/><path d="M778.6 728.4V725.9" stroke="#4d7397" stroke-width="1"/><path d="M844.4 728.4V725.9" stroke="#4d7397" stroke-width="1"/><path d="M910.3 728.4V725.9" stroke="#4d7397" stroke-width="1"/><path d="M976.1 728.4V725.9" stroke="#4d7397" stroke-width="1"/><path d="M1041.9 728.4V723.9" stroke="#4d7397" stroke-width="1"/><path d="M1107.7 728.4V725.9" stroke="#4d7397" stroke-width="1"/><path d="M1173.5 728.4V725.9" stroke="#4d7397" stroke-width="1"/><path d="M1239.4 728.4V725.9" stroke="#4d7397" stroke-width="1"/><path d="M1305.2 728.4V725.9" stroke="#4d7397" stroke-width="1"/><path d="M1371.0 728.4V723.9" stroke="#4d7397" stroke-width="1"/><rect x="1303.5" y="532.5" width="60" height="35" fill="none" stroke="#222" stroke-width="1"/><path d="M1308 542.5H1331" stroke="#e0484e" stroke-width="1.1"/><path d="M1308 557.5H1331" stroke="#333" stroke-width="1.1" stroke-dasharray="2.5 1.5"/></svg>
<div class="abs" style="left:0;width:49.2px;text-align:right;top:518.9px;font-size:8.5px;color:#3f6588"><i style="display:inline-block;width:4.33px;text-align:center;font-style:normal">0</i><i style="display:inline-block;width:4.33px;text-align:center;font-style:normal">.</i><i style="display:inline-block;width:4.33px;text-align:center;font-style:normal">2</i><i style="display:inline-block;width:4.33px;text-align:center;font-style:normal">7</i><i style="display:inline-block;width:4.33px;text-align:center;font-style:normal">2</i><i style="display:inline-block;width:4.33px;text-align:center;font-style:normal">9</i><i style="display:inline-block;width:4.33px;text-align:center;font-style:normal">0</i></div>
<div class="abs" style="left:0;width:49.2px;text-align:right;top:570.1px;font-size:8.5px;color:#3f6588"><i style="display:inline-block;width:4.33px;text-align:center;font-style:normal">0</i><i style="display:inline-block;width:4.33px;text-align:center;font-style:normal">.</i><i style="display:inline-block;width:4.33px;text-align:center;font-style:normal">2</i><i style="display:inline-block;width:4.33px;text-align:center;font-style:normal">2</i><i style="display:inline-block;width:4.33px;text-align:center;font-style:normal">5</i><i style="display:inline-block;width:4.33px;text-align:center;font-style:normal">7</i><i style="display:inline-block;width:4.33px;text-align:center;font-style:normal">5</i></div>
<div class="abs" style="left:0;width:49.2px;text-align:right;top:621.4px;font-size:8.5px;color:#3f6588"><i style="display:inline-block;width:4.33px;text-align:center;font-style:normal">0</i><i style="display:inline-block;width:4.33px;text-align:center;font-style:normal">.</i><i style="display:inline-block;width:4.33px;text-align:center;font-style:normal">1</i><i style="display:inline-block;width:4.33px;text-align:center;font-style:normal">7</i><i style="display:inline-block;width:4.33px;text-align:center;font-style:normal">8</i><i style="display:inline-block;width:4.33px;text-align:center;font-style:normal">6</i><i style="display:inline-block;width:4.33px;text-align:center;font-style:normal">1</i></div>
<div class="abs" style="left:0;width:49.2px;text-align:right;top:672.6px;font-size:8.5px;color:#3f6588"><i style="display:inline-block;width:4.33px;text-align:center;font-style:normal">0</i><i style="display:inline-block;width:4.33px;text-align:center;font-style:normal">.</i><i style="display:inline-block;width:4.33px;text-align:center;font-style:normal">1</i><i style="display:inline-block;width:4.33px;text-align:center;font-style:normal">3</i><i style="display:inline-block;width:4.33px;text-align:center;font-style:normal">1</i><i style="display:inline-block;width:4.33px;text-align:center;font-style:normal">4</i><i style="display:inline-block;width:4.33px;text-align:center;font-style:normal">7</i></div>
<div class="abs" style="left:0;width:49.2px;text-align:right;top:723.9px;font-size:8.5px;color:#3f6588"><i style="display:inline-block;width:4.33px;text-align:center;font-style:normal">0</i><i style="display:inline-block;width:4.33px;text-align:center;font-style:normal">.</i><i style="display:inline-block;width:4.33px;text-align:center;font-style:normal">0</i><i style="display:inline-block;width:4.33px;text-align:center;font-style:normal">8</i><i style="display:inline-block;width:4.33px;text-align:center;font-style:normal">4</i><i style="display:inline-block;width:4.33px;text-align:center;font-style:normal">3</i><i style="display:inline-block;width:4.33px;text-align:center;font-style:normal">2</i></div>
<div class="abs" style="left:39.1px;top:730px;font-size:8.5px;color:#3f6588"><i style="display:inline-block;width:4.33px;text-align:center;font-style:normal">4</i><i style="display:inline-block;width:4.33px;text-align:center;font-style:normal">3</i><i style="display:inline-block;width:4.33px;text-align:center;font-style:normal">0</i><i style="display:inline-block;width:4.33px;text-align:center;font-style:normal">.</i><i style="display:inline-block;width:4.33px;text-align:center;font-style:normal">2</i><i style="display:inline-block;width:4.33px;text-align:center;font-style:normal">8</i><i style="display:inline-block;width:4.33px;text-align:center;font-style:normal">5</i></div>
<div class="abs" style="left:368.2px;top:730px;font-size:8.5px;color:#3f6588"><i style="display:inline-block;width:4.33px;text-align:center;font-style:normal">5</i><i style="display:inline-block;width:4.33px;text-align:center;font-style:normal">5</i><i style="display:inline-block;width:4.33px;text-align:center;font-style:normal">5</i><i style="display:inline-block;width:4.33px;text-align:center;font-style:normal">.</i><i style="display:inline-block;width:4.33px;text-align:center;font-style:normal">3</i><i style="display:inline-block;width:4.33px;text-align:center;font-style:normal">6</i><i style="display:inline-block;width:4.33px;text-align:center;font-style:normal">2</i></div>
<div class="abs" style="left:697.3px;top:730px;font-size:8.5px;color:#3f6588"><i style="display:inline-block;width:4.33px;text-align:center;font-style:normal">6</i><i style="display:inline-block;width:4.33px;text-align:center;font-style:normal">8</i><i style="display:inline-block;width:4.33px;text-align:center;font-style:normal">0</i><i style="display:inline-block;width:4.33px;text-align:center;font-style:normal">.</i><i style="display:inline-block;width:4.33px;text-align:center;font-style:normal">4</i><i style="display:inline-block;width:4.33px;text-align:center;font-style:normal">3</i><i style="display:inline-block;width:4.33px;text-align:center;font-style:normal">8</i></div>
<div class="abs" style="left:1026.4px;top:730px;font-size:8.5px;color:#3f6588"><i style="display:inline-block;width:4.33px;text-align:center;font-style:normal">8</i><i style="display:inline-block;width:4.33px;text-align:center;font-style:normal">0</i><i style="display:inline-block;width:4.33px;text-align:center;font-style:normal">5</i><i style="display:inline-block;width:4.33px;text-align:center;font-style:normal">.</i><i style="display:inline-block;width:4.33px;text-align:center;font-style:normal">5</i><i style="display:inline-block;width:4.33px;text-align:center;font-style:normal">1</i><i style="display:inline-block;width:4.33px;text-align:center;font-style:normal">5</i></div>
<div class="abs" style="left:1350.5px;top:730px;font-size:8.5px;color:#3f6588"><i style="display:inline-block;width:4.33px;text-align:center;font-style:normal">9</i><i style="display:inline-block;width:4.33px;text-align:center;font-style:normal">3</i><i style="display:inline-block;width:4.33px;text-align:center;font-style:normal">0</i><i style="display:inline-block;width:4.33px;text-align:center;font-style:normal">.</i><i style="display:inline-block;width:4.33px;text-align:center;font-style:normal">5</i><i style="display:inline-block;width:4.33px;text-align:center;font-style:normal">9</i><i style="display:inline-block;width:4.33px;text-align:center;font-style:normal">2</i></div>
<div class="abs" style="left:681px;top:742px;font-size:8.5px;font-family:'Liberation Mono',monospace;color:#3f6588"><i style="display:inline-block;width:4.33px;text-align:center;font-style:normal">W</i><i style="display:inline-block;width:4.33px;text-align:center;font-style:normal">a</i><i style="display:inline-block;width:4.33px;text-align:center;font-style:normal">v</i><i style="display:inline-block;width:4.33px;text-align:center;font-style:normal">e</i><i style="display:inline-block;width:4.33px;text-align:center;font-style:normal">l</i><i style="display:inline-block;width:4.33px;text-align:center;font-style:normal">e</i><i style="display:inline-block;width:4.33px;text-align:center;font-style:normal">n</i><i style="display:inline-block;width:4.33px;text-align:center;font-style:normal">g</i><i style="display:inline-block;width:4.33px;text-align:center;font-style:normal">t</i><i style="display:inline-block;width:4.33px;text-align:center;font-style:normal">h</i><i style="display:inline-block;width:4.33px;text-align:center;font-style:normal">(</i><i style="display:inline-block;width:4.33px;text-align:center;font-style:normal">n</i><i style="display:inline-block;width:4.33px;text-align:center;font-style:normal">m</i><i style="display:inline-block;width:4.33px;text-align:center;font-style:normal">)</i></div>
<div class="abs" style="left:0px;top:622px;font-size:8.5px;font-family:'Liberation Mono',monospace;color:#3f6588;transform:rotate(-90deg)"><i style="display:inline-block;width:4.33px;text-align:center;font-style:normal">R</i><i style="display:inline-block;width:4.33px;text-align:center;font-style:normal">e</i><i style="display:inline-block;width:4.33px;text-align:center;font-style:normal">f</i><i style="display:inline-block;width:4.33px;text-align:center;font-style:normal">l</i></div>
<div class="abs" style="left:1336px;top:537px;font-size:8.5px;font-family:'Liberation Mono',monospace;color:#111;font-weight:bold"><i style="display:inline-block;width:4.33px;text-align:center;font-style:normal">R</i><i style="display:inline-block;width:4.33px;text-align:center;font-style:normal">e</i><i style="display:inline-block;width:4.33px;text-align:center;font-style:normal">f</i><i style="display:inline-block;width:4.33px;text-align:center;font-style:normal">l</i></div>
<div class="abs" style="left:1335.5px;top:552px;font-size:8.5px;font-family:'Liberation Mono',monospace;color:#111;font-weight:bold"><i style="display:inline-block;width:4.33px;text-align:center;font-style:normal">M</i><i style="display:inline-block;width:4.33px;text-align:center;font-style:normal">o</i><i style="display:inline-block;width:4.33px;text-align:center;font-style:normal">d</i><i style="display:inline-block;width:4.33px;text-align:center;font-style:normal">e</i><i style="display:inline-block;width:4.33px;text-align:center;font-style:normal">l</i></div>
</body></html>
